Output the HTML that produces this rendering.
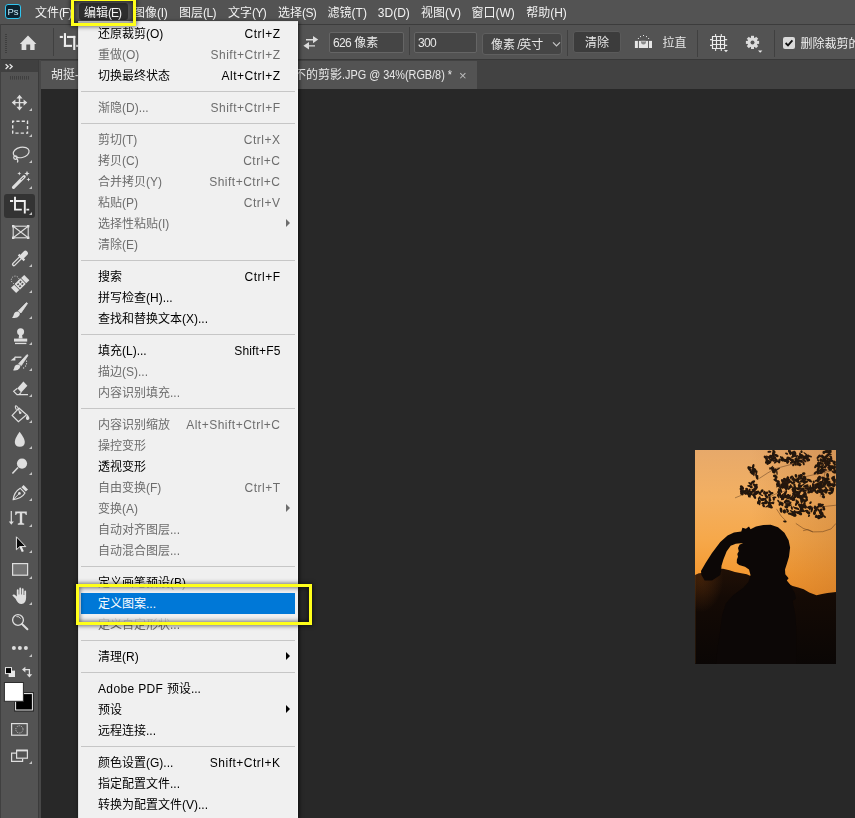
<!DOCTYPE html>
<html lang="zh-CN">
<head>
<meta charset="utf-8">
<title>Photoshop 编辑菜单</title>
<style>
*{box-sizing:border-box;margin:0;padding:0}
html,body{width:855px;height:818px;overflow:hidden;background:#282828}
body{position:relative;font-family:"Liberation Sans","Noto Sans CJK SC",sans-serif;font-size:12px;color:#e6e6e6;-webkit-font-smoothing:antialiased}
.abs{position:absolute}
/* menu bar */
#menubar,#optbar,#tabbar{will-change:transform}
#menubar{position:absolute;left:0;top:0;width:855px;height:24px;background:#535353}
#menubar .m{position:absolute;top:2px;height:24px;line-height:23px;white-space:nowrap;color:#f2f2f2;font-size:12px}
#editbg{position:absolute;left:78.7px;top:3px;width:49.3px;height:16.7px;background:#2e2e2e;border-radius:3px}
#pslogo{position:absolute;left:5px;top:4px;width:16px;height:15px;border:1px solid #31c5f0;border-radius:3px;background:#0c2330;color:#c8ecfa;font-size:9.5px;line-height:13px;text-align:center;letter-spacing:0}
/* options bar */
#optbar{position:absolute;left:0;top:24px;width:855px;height:36px;background:#535353;border-top:1px solid #3c3c3c;border-bottom:1px solid #383838}
.vsep{position:absolute;width:1px;background:#404040}
.inp{position:absolute;background:#454545;border:1px solid #656565;border-radius:2px;color:#e8e8e8;font-size:12px;line-height:21px;padding-left:3px;white-space:nowrap}
/* tab bar */
#tabbar{position:absolute;left:41px;top:60px;width:814px;height:29px;background:#424242}
#tab{position:absolute;left:0;top:1px;width:436px;height:28px;background:#535353;color:#e8e8e8;line-height:29px;white-space:nowrap}
/* toolbar */
#toolbar{position:absolute;left:0;top:60px;width:38px;height:758px;background:#535353}
#tbhead{position:absolute;left:0;top:0;width:38px;height:12px;background:#404040}
#tbsep{position:absolute;left:38px;top:60px;width:3px;height:758px;background:#474747;border-left:1px solid #3b3b3b}
#lborder{position:absolute;left:0;top:24px;width:1px;height:794px;background:#404040}
.tool{position:absolute;left:7px;width:26px;height:26px}
.tri{position:absolute;width:0;height:0;border-left:3px solid transparent;border-bottom:3px solid #cfcfcf}
/* dropdown menu */
#menu{position:absolute;left:78px;top:21px;width:220px;height:797px;background:#f0f0f0;border-left:1px solid #e0e0e0;border-right:1px solid #f6f6f6;border-top:1px solid #e4e4e4;color:#000;box-shadow:1px 1px 4px rgba(0,0,0,.75)}
.mi{position:absolute;left:2px;width:214px;height:21px;line-height:20px;white-space:nowrap;font-size:12px}
.mi .t{position:absolute;left:17px;top:1px}
.mi .k{position:absolute;right:14.5px;top:1px;letter-spacing:.5px}
.mi.dis{color:#6d6d6d}
.mi.sel{background:#0078d7;color:#fff}
.sep{position:absolute;left:2px;width:214px;height:1px;background:#c6c6c6}
.ar{position:absolute;left:205.3px;top:5.7px;width:0;height:0;border-top:4px solid transparent;border-bottom:4px solid transparent;border-left:4.5px solid #000}
.dis .ar{border-left-color:#6d6d6d}
.ybox{position:absolute;border:3.3px solid #ffff1a;filter:drop-shadow(0 0 2.5px rgba(0,0,0,.85))}
</style>
</head>
<body>
<!-- canvas / document area -->
<div id="tabbar">
  <div id="tab"><span class="abs" style="left:10px">胡挺-</span><span class="abs" style="left:253px">不的剪影</span><span class="abs" style="left:300.5px;transform:scaleX(.905);transform-origin:0 50%">.JPG @ 34%(RGB/8) *</span><span class="abs" style="left:418px;color:#bdbdbd;font-size:13px">×</span></div>
</div>

<svg class="abs" style="left:695px;top:450px" width="141" height="213.5" viewBox="0 0 141 213.5">
<defs>
<linearGradient id="sky" x1="0" y1="0" x2="0" y2="1"><stop offset="0" stop-color="#e7a96a"/><stop offset="0.22" stop-color="#f3b062"/><stop offset="0.42" stop-color="#f6a84a"/><stop offset="0.58" stop-color="#f59a32"/><stop offset="0.68" stop-color="#f09028"/></linearGradient>
<linearGradient id="shade" x1="0" y1="0" x2="1" y2="0"><stop offset="0.4" stop-color="#a8642c" stop-opacity="0"/><stop offset="1" stop-color="#a8642c" stop-opacity="0.3"/></linearGradient>
<linearGradient id="hill" x1="0" y1="0" x2="0" y2="1"><stop offset="0" stop-color="#201006"/><stop offset="0.3" stop-color="#140a05"/><stop offset="1" stop-color="#0a0605"/></linearGradient>
<radialGradient id="glow" cx="0.04" cy="0.6" r="0.16"><stop offset="0" stop-color="#8a460d" stop-opacity="0.32"/><stop offset="1" stop-color="#b8601a" stop-opacity="0"/></radialGradient>
<filter id="bl" x="-5%" y="-5%" width="110%" height="110%"><feGaussianBlur stdDeviation="0.45"/></filter>
<clipPath id="hc"><path d="M0.1 125.0 L3.3 123.5 L7.8 122.8 L13.3 119.9 L20.7 119.1 L28.0 118.8 L34.4 120.2 L39.9 122.1 L46.3 123.2 L51.8 124.3 L57.3 126.8 L90.3 132.3 L97.7 136.0 L103.2 137.5 L108.7 139.3 L114.2 142.6 L121.5 145.2 L127.0 144.1 L132.5 143.0 L141.1 141.9 L141.1 216.7 L0.1 216.7Z"/></clipPath>
</defs>
<rect width="141" height="213.5" fill="url(#sky)"/>
<rect width="141" height="213.5" fill="url(#shade)"/>
<g fill="#24150a" filter="url(#bl)"><ellipse cx="59.0" cy="23.8" rx="2.4" ry="0.8" transform="rotate(96 59.0 23.8)"/><ellipse cx="58.3" cy="22.4" rx="2.2" ry="0.7" transform="rotate(78 58.3 22.4)"/><ellipse cx="59.8" cy="21.1" rx="2.0" ry="1.4" transform="rotate(22 59.8 21.1)"/><ellipse cx="61.9" cy="27.0" rx="2.9" ry="1.2" transform="rotate(71 61.9 27.0)"/><ellipse cx="59.0" cy="19.8" rx="2.8" ry="1.0" transform="rotate(26 59.0 19.8)"/><ellipse cx="61.4" cy="23.0" rx="2.7" ry="0.9" transform="rotate(105 61.4 23.0)"/><ellipse cx="54.8" cy="17.2" rx="2.2" ry="0.8" transform="rotate(11 54.8 17.2)"/><ellipse cx="62.3" cy="26.9" rx="2.0" ry="1.0" transform="rotate(105 62.3 26.9)"/><ellipse cx="56.8" cy="22.8" rx="2.7" ry="1.3" transform="rotate(44 56.8 22.8)"/><ellipse cx="54.4" cy="18.9" rx="2.8" ry="1.4" transform="rotate(52 54.4 18.9)"/><ellipse cx="59.4" cy="19.5" rx="2.0" ry="1.4" transform="rotate(27 59.4 19.5)"/><ellipse cx="57.5" cy="21.0" rx="2.4" ry="1.4" transform="rotate(103 57.5 21.0)"/><ellipse cx="58.2" cy="16.4" rx="2.5" ry="1.2" transform="rotate(104 58.2 16.4)"/><ellipse cx="47.1" cy="42.1" rx="2.9" ry="1.1" transform="rotate(120 47.1 42.1)"/><ellipse cx="61.2" cy="42.6" rx="2.4" ry="1.6" transform="rotate(148 61.2 42.6)"/><ellipse cx="53.5" cy="45.1" rx="2.4" ry="0.7" transform="rotate(83 53.5 45.1)"/><ellipse cx="56.0" cy="42.5" rx="1.4" ry="1.4" transform="rotate(23 56.0 42.5)"/><ellipse cx="54.7" cy="45.3" rx="2.8" ry="0.8" transform="rotate(81 54.7 45.3)"/><ellipse cx="47.0" cy="37.5" rx="2.7" ry="1.5" transform="rotate(50 47.0 37.5)"/><ellipse cx="50.2" cy="42.5" rx="2.8" ry="1.6" transform="rotate(27 50.2 42.5)"/><ellipse cx="56.4" cy="43.6" rx="1.7" ry="1.1" transform="rotate(106 56.4 43.6)"/><ellipse cx="54.6" cy="40.5" rx="2.0" ry="1.0" transform="rotate(102 54.6 40.5)"/><ellipse cx="61.3" cy="37.9" rx="2.2" ry="1.3" transform="rotate(122 61.3 37.9)"/><ellipse cx="62.2" cy="42.6" rx="2.6" ry="1.5" transform="rotate(144 62.2 42.6)"/><ellipse cx="50.4" cy="43.3" rx="1.5" ry="1.3" transform="rotate(11 50.4 43.3)"/><ellipse cx="58.1" cy="41.6" rx="1.6" ry="1.0" transform="rotate(9 58.1 41.6)"/><ellipse cx="57.9" cy="40.0" rx="1.5" ry="1.0" transform="rotate(5 57.9 40.0)"/><ellipse cx="59.3" cy="35.3" rx="1.6" ry="0.9" transform="rotate(63 59.3 35.3)"/><ellipse cx="52.7" cy="42.2" rx="2.7" ry="1.6" transform="rotate(84 52.7 42.2)"/><ellipse cx="52.1" cy="40.2" rx="1.5" ry="1.0" transform="rotate(48 52.1 40.2)"/><ellipse cx="56.2" cy="37.0" rx="1.3" ry="1.6" transform="rotate(95 56.2 37.0)"/><ellipse cx="58.4" cy="44.9" rx="1.3" ry="1.2" transform="rotate(176 58.4 44.9)"/><ellipse cx="59.2" cy="34.6" rx="1.7" ry="1.0" transform="rotate(30 59.2 34.6)"/><ellipse cx="55.4" cy="33.9" rx="2.6" ry="1.0" transform="rotate(40 55.4 33.9)"/><ellipse cx="57.8" cy="32.2" rx="2.7" ry="1.4" transform="rotate(147 57.8 32.2)"/><ellipse cx="54.3" cy="36.0" rx="2.2" ry="1.0" transform="rotate(5 54.3 36.0)"/><ellipse cx="59.0" cy="40.8" rx="1.7" ry="1.3" transform="rotate(172 59.0 40.8)"/><ellipse cx="46.9" cy="42.6" rx="3.0" ry="1.6" transform="rotate(66 46.9 42.6)"/><ellipse cx="55.3" cy="43.9" rx="1.6" ry="0.9" transform="rotate(112 55.3 43.9)"/><ellipse cx="60.9" cy="35.4" rx="2.1" ry="1.3" transform="rotate(144 60.9 35.4)"/><ellipse cx="60.5" cy="43.5" rx="2.8" ry="1.4" transform="rotate(135 60.5 43.5)"/><ellipse cx="51.1" cy="40.5" rx="2.6" ry="1.0" transform="rotate(144 51.1 40.5)"/><ellipse cx="59.8" cy="39.0" rx="2.0" ry="1.6" transform="rotate(130 59.8 39.0)"/><ellipse cx="56.0" cy="42.6" rx="1.6" ry="1.5" transform="rotate(145 56.0 42.6)"/><ellipse cx="59.3" cy="46.1" rx="3.0" ry="1.3" transform="rotate(63 59.3 46.1)"/><ellipse cx="51.7" cy="39.1" rx="1.3" ry="1.6" transform="rotate(117 51.7 39.1)"/><ellipse cx="46.5" cy="38.6" rx="2.0" ry="1.5" transform="rotate(149 46.5 38.6)"/><ellipse cx="55.6" cy="44.1" rx="1.8" ry="0.9" transform="rotate(106 55.6 44.1)"/><ellipse cx="54.3" cy="45.4" rx="1.5" ry="1.5" transform="rotate(64 54.3 45.4)"/><ellipse cx="48.4" cy="41.6" rx="2.8" ry="1.1" transform="rotate(165 48.4 41.6)"/><ellipse cx="63.7" cy="49.6" rx="2.2" ry="0.7" transform="rotate(79 63.7 49.6)"/><ellipse cx="70.7" cy="50.2" rx="2.7" ry="0.9" transform="rotate(85 70.7 50.2)"/><ellipse cx="69.3" cy="42.7" rx="1.9" ry="1.2" transform="rotate(100 69.3 42.7)"/><ellipse cx="71.1" cy="46.7" rx="2.3" ry="0.9" transform="rotate(50 71.1 46.7)"/><ellipse cx="71.3" cy="43.0" rx="2.3" ry="1.4" transform="rotate(164 71.3 43.0)"/><ellipse cx="63.6" cy="52.3" rx="2.2" ry="1.2" transform="rotate(125 63.6 52.3)"/><ellipse cx="63.9" cy="51.8" rx="2.1" ry="1.5" transform="rotate(126 63.9 51.8)"/><ellipse cx="76.8" cy="43.2" rx="1.7" ry="1.2" transform="rotate(170 76.8 43.2)"/><ellipse cx="72.3" cy="46.7" rx="1.5" ry="1.1" transform="rotate(13 72.3 46.7)"/><ellipse cx="70.6" cy="52.3" rx="2.4" ry="1.4" transform="rotate(161 70.6 52.3)"/><ellipse cx="74.8" cy="56.4" rx="2.4" ry="0.8" transform="rotate(159 74.8 56.4)"/><ellipse cx="74.7" cy="48.8" rx="2.9" ry="1.1" transform="rotate(88 74.7 48.8)"/><ellipse cx="78.8" cy="49.1" rx="1.6" ry="1.1" transform="rotate(93 78.8 49.1)"/><ellipse cx="68.2" cy="53.3" rx="1.8" ry="1.3" transform="rotate(4 68.2 53.3)"/><ellipse cx="64.6" cy="47.6" rx="1.3" ry="1.0" transform="rotate(112 64.6 47.6)"/><ellipse cx="68.1" cy="49.5" rx="3.0" ry="1.4" transform="rotate(175 68.1 49.5)"/><ellipse cx="74.2" cy="52.7" rx="1.4" ry="1.4" transform="rotate(49 74.2 52.7)"/><ellipse cx="74.5" cy="54.2" rx="2.8" ry="1.4" transform="rotate(47 74.5 54.2)"/><ellipse cx="75.7" cy="57.1" rx="2.3" ry="1.3" transform="rotate(16 75.7 57.1)"/><ellipse cx="77.6" cy="52.5" rx="2.0" ry="0.8" transform="rotate(169 77.6 52.5)"/><ellipse cx="64.9" cy="43.3" rx="1.4" ry="1.5" transform="rotate(12 64.9 43.3)"/><ellipse cx="74.5" cy="44.8" rx="1.9" ry="1.2" transform="rotate(167 74.5 44.8)"/><ellipse cx="70.0" cy="53.1" rx="2.2" ry="0.9" transform="rotate(20 70.0 53.1)"/><ellipse cx="71.5" cy="51.5" rx="1.6" ry="1.0" transform="rotate(55 71.5 51.5)"/><ellipse cx="70.7" cy="44.6" rx="2.2" ry="0.9" transform="rotate(62 70.7 44.6)"/><ellipse cx="75.0" cy="50.2" rx="1.3" ry="1.4" transform="rotate(99 75.0 50.2)"/><ellipse cx="72.8" cy="55.8" rx="2.9" ry="0.8" transform="rotate(147 72.8 55.8)"/><ellipse cx="64.5" cy="52.5" rx="2.7" ry="1.1" transform="rotate(91 64.5 52.5)"/><ellipse cx="66.9" cy="41.0" rx="1.9" ry="1.4" transform="rotate(127 66.9 41.0)"/><ellipse cx="66.5" cy="45.1" rx="1.9" ry="0.7" transform="rotate(23 66.5 45.1)"/><ellipse cx="77.6" cy="53.2" rx="1.7" ry="0.8" transform="rotate(15 77.6 53.2)"/><ellipse cx="75.1" cy="42.2" rx="2.4" ry="1.0" transform="rotate(44 75.1 42.2)"/><ellipse cx="68.7" cy="55.9" rx="1.6" ry="1.1" transform="rotate(47 68.7 55.9)"/><ellipse cx="79.3" cy="47.5" rx="2.2" ry="0.9" transform="rotate(174 79.3 47.5)"/><ellipse cx="68.4" cy="55.0" rx="1.3" ry="1.0" transform="rotate(85 68.4 55.0)"/><ellipse cx="66.3" cy="49.6" rx="2.2" ry="0.7" transform="rotate(48 66.3 49.6)"/><ellipse cx="75.4" cy="52.9" rx="1.4" ry="0.7" transform="rotate(55 75.4 52.9)"/><ellipse cx="79.9" cy="20.6" rx="2.2" ry="1.4" transform="rotate(118 79.9 20.6)"/><ellipse cx="74.4" cy="1.8" rx="2.0" ry="1.0" transform="rotate(177 74.4 1.8)"/><ellipse cx="82.8" cy="19.2" rx="2.4" ry="0.7" transform="rotate(150 82.8 19.2)"/><ellipse cx="81.3" cy="5.5" rx="2.5" ry="1.4" transform="rotate(25 81.3 5.5)"/><ellipse cx="72.3" cy="11.7" rx="2.7" ry="1.4" transform="rotate(149 72.3 11.7)"/><ellipse cx="70.7" cy="7.6" rx="2.5" ry="1.3" transform="rotate(41 70.7 7.6)"/><ellipse cx="80.5" cy="12.3" rx="1.9" ry="0.8" transform="rotate(150 80.5 12.3)"/><ellipse cx="71.7" cy="9.7" rx="2.4" ry="1.3" transform="rotate(88 71.7 9.7)"/><ellipse cx="84.3" cy="11.0" rx="2.6" ry="1.2" transform="rotate(96 84.3 11.0)"/><ellipse cx="76.3" cy="9.7" rx="2.6" ry="0.9" transform="rotate(13 76.3 9.7)"/><ellipse cx="78.8" cy="21.8" rx="1.6" ry="1.4" transform="rotate(176 78.8 21.8)"/><ellipse cx="73.2" cy="13.1" rx="2.1" ry="1.3" transform="rotate(138 73.2 13.1)"/><ellipse cx="72.2" cy="6.6" rx="1.4" ry="0.8" transform="rotate(46 72.2 6.6)"/><ellipse cx="76.4" cy="5.7" rx="2.3" ry="0.7" transform="rotate(11 76.4 5.7)"/><ellipse cx="78.6" cy="21.4" rx="2.5" ry="1.3" transform="rotate(52 78.6 21.4)"/><ellipse cx="72.6" cy="12.1" rx="2.1" ry="0.8" transform="rotate(161 72.6 12.1)"/><ellipse cx="81.9" cy="22.3" rx="2.9" ry="0.7" transform="rotate(83 81.9 22.3)"/><ellipse cx="79.0" cy="1.3" rx="2.1" ry="0.9" transform="rotate(38 79.0 1.3)"/><ellipse cx="80.6" cy="9.7" rx="2.3" ry="0.8" transform="rotate(94 80.6 9.7)"/><ellipse cx="80.1" cy="10.3" rx="2.7" ry="1.2" transform="rotate(160 80.1 10.3)"/><ellipse cx="75.8" cy="6.9" rx="2.8" ry="1.1" transform="rotate(4 75.8 6.9)"/><ellipse cx="82.9" cy="11.3" rx="2.1" ry="1.0" transform="rotate(25 82.9 11.3)"/><ellipse cx="76.3" cy="17.7" rx="2.7" ry="0.7" transform="rotate(135 76.3 17.7)"/><ellipse cx="78.5" cy="8.4" rx="2.9" ry="1.3" transform="rotate(162 78.5 8.4)"/><ellipse cx="77.8" cy="18.9" rx="2.0" ry="1.6" transform="rotate(106 77.8 18.9)"/><ellipse cx="75.6" cy="18.3" rx="1.8" ry="0.7" transform="rotate(18 75.6 18.3)"/><ellipse cx="78.8" cy="6.4" rx="2.9" ry="0.9" transform="rotate(48 78.8 6.4)"/><ellipse cx="74.4" cy="12.2" rx="1.9" ry="1.6" transform="rotate(159 74.4 12.2)"/><ellipse cx="78.5" cy="3.2" rx="2.9" ry="1.5" transform="rotate(99 78.5 3.2)"/><ellipse cx="77.0" cy="9.6" rx="2.5" ry="1.1" transform="rotate(135 77.0 9.6)"/><ellipse cx="74.4" cy="7.6" rx="1.4" ry="1.5" transform="rotate(23 74.4 7.6)"/><ellipse cx="79.7" cy="25.9" rx="1.8" ry="1.4" transform="rotate(176 79.7 25.9)"/><ellipse cx="80.7" cy="29.8" rx="1.8" ry="1.2" transform="rotate(71 80.7 29.8)"/><ellipse cx="81.1" cy="27.3" rx="1.7" ry="1.5" transform="rotate(89 81.1 27.3)"/><ellipse cx="81.1" cy="30.5" rx="3.0" ry="1.1" transform="rotate(25 81.1 30.5)"/><ellipse cx="102.4" cy="9.4" rx="1.9" ry="0.8" transform="rotate(43 102.4 9.4)"/><ellipse cx="100.3" cy="13.1" rx="2.8" ry="1.4" transform="rotate(74 100.3 13.1)"/><ellipse cx="91.9" cy="10.1" rx="1.9" ry="1.0" transform="rotate(11 91.9 10.1)"/><ellipse cx="98.4" cy="14.8" rx="1.5" ry="1.2" transform="rotate(113 98.4 14.8)"/><ellipse cx="105.2" cy="4.3" rx="1.8" ry="0.9" transform="rotate(72 105.2 4.3)"/><ellipse cx="87.7" cy="9.7" rx="2.7" ry="1.5" transform="rotate(4 87.7 9.7)"/><ellipse cx="112.6" cy="8.5" rx="2.8" ry="1.1" transform="rotate(106 112.6 8.5)"/><ellipse cx="109.8" cy="7.1" rx="2.9" ry="1.4" transform="rotate(154 109.8 7.1)"/><ellipse cx="107.9" cy="6.4" rx="1.5" ry="0.8" transform="rotate(94 107.9 6.4)"/><ellipse cx="95.1" cy="2.4" rx="2.4" ry="1.4" transform="rotate(82 95.1 2.4)"/><ellipse cx="98.1" cy="6.6" rx="2.6" ry="0.9" transform="rotate(166 98.1 6.6)"/><ellipse cx="96.0" cy="3.7" rx="1.5" ry="0.9" transform="rotate(115 96.0 3.7)"/><ellipse cx="99.3" cy="4.6" rx="1.4" ry="1.2" transform="rotate(105 99.3 4.6)"/><ellipse cx="95.7" cy="9.5" rx="2.3" ry="0.7" transform="rotate(54 95.7 9.5)"/><ellipse cx="87.2" cy="9.0" rx="2.4" ry="1.5" transform="rotate(86 87.2 9.0)"/><ellipse cx="101.5" cy="11.0" rx="2.9" ry="1.3" transform="rotate(55 101.5 11.0)"/><ellipse cx="110.8" cy="7.9" rx="2.4" ry="1.1" transform="rotate(46 110.8 7.9)"/><ellipse cx="94.0" cy="1.2" rx="1.4" ry="1.0" transform="rotate(76 94.0 1.2)"/><ellipse cx="98.2" cy="3.9" rx="2.7" ry="1.4" transform="rotate(91 98.2 3.9)"/><ellipse cx="104.7" cy="14.6" rx="1.8" ry="1.4" transform="rotate(42 104.7 14.6)"/><ellipse cx="103.1" cy="13.9" rx="1.8" ry="1.6" transform="rotate(89 103.1 13.9)"/><ellipse cx="103.4" cy="10.6" rx="2.0" ry="1.3" transform="rotate(171 103.4 10.6)"/><ellipse cx="106.3" cy="11.1" rx="1.7" ry="1.6" transform="rotate(26 106.3 11.1)"/><ellipse cx="104.2" cy="7.7" rx="2.0" ry="1.5" transform="rotate(159 104.2 7.7)"/><ellipse cx="99.3" cy="2.9" rx="1.9" ry="0.9" transform="rotate(168 99.3 2.9)"/><ellipse cx="100.8" cy="5.7" rx="2.4" ry="1.0" transform="rotate(67 100.8 5.7)"/><ellipse cx="97.9" cy="10.0" rx="1.3" ry="1.0" transform="rotate(63 97.9 10.0)"/><ellipse cx="105.7" cy="6.4" rx="2.9" ry="0.9" transform="rotate(64 105.7 6.4)"/><ellipse cx="106.5" cy="1.7" rx="1.4" ry="1.1" transform="rotate(67 106.5 1.7)"/><ellipse cx="106.3" cy="5.4" rx="1.9" ry="1.5" transform="rotate(5 106.3 5.4)"/><ellipse cx="89.9" cy="10.9" rx="2.6" ry="0.7" transform="rotate(6 89.9 10.9)"/><ellipse cx="113.5" cy="10.0" rx="1.7" ry="1.4" transform="rotate(162 113.5 10.0)"/><ellipse cx="96.9" cy="10.6" rx="2.9" ry="1.3" transform="rotate(47 96.9 10.6)"/><ellipse cx="99.2" cy="2.8" rx="1.8" ry="0.7" transform="rotate(136 99.2 2.8)"/><ellipse cx="110.7" cy="4.0" rx="2.9" ry="0.7" transform="rotate(42 110.7 4.0)"/><ellipse cx="87.0" cy="8.3" rx="2.9" ry="1.0" transform="rotate(45 87.0 8.3)"/><ellipse cx="91.7" cy="9.5" rx="2.9" ry="0.9" transform="rotate(144 91.7 9.5)"/><ellipse cx="99.9" cy="2.6" rx="2.3" ry="1.0" transform="rotate(58 99.9 2.6)"/><ellipse cx="92.6" cy="12.5" rx="1.4" ry="0.9" transform="rotate(136 92.6 12.5)"/><ellipse cx="100.9" cy="9.1" rx="1.4" ry="1.2" transform="rotate(59 100.9 9.1)"/><ellipse cx="114.2" cy="6.2" rx="3.0" ry="0.9" transform="rotate(15 114.2 6.2)"/><ellipse cx="109.1" cy="10.3" rx="2.5" ry="1.1" transform="rotate(42 109.1 10.3)"/><ellipse cx="91.1" cy="10.2" rx="2.4" ry="1.4" transform="rotate(152 91.1 10.2)"/><ellipse cx="98.3" cy="4.8" rx="2.7" ry="1.0" transform="rotate(102 98.3 4.8)"/><ellipse cx="92.2" cy="12.0" rx="1.6" ry="0.9" transform="rotate(44 92.2 12.0)"/><ellipse cx="108.5" cy="13.2" rx="2.3" ry="1.0" transform="rotate(71 108.5 13.2)"/><ellipse cx="111.0" cy="6.9" rx="1.7" ry="1.4" transform="rotate(118 111.0 6.9)"/><ellipse cx="105.4" cy="7.0" rx="2.1" ry="1.4" transform="rotate(151 105.4 7.0)"/><ellipse cx="103.3" cy="6.3" rx="1.8" ry="0.8" transform="rotate(34 103.3 6.3)"/><ellipse cx="111.6" cy="6.1" rx="2.9" ry="1.0" transform="rotate(156 111.6 6.1)"/><ellipse cx="93.9" cy="8.4" rx="2.6" ry="1.6" transform="rotate(19 93.9 8.4)"/><ellipse cx="91.6" cy="3.6" rx="1.7" ry="1.0" transform="rotate(25 91.6 3.6)"/><ellipse cx="102.9" cy="10.9" rx="2.3" ry="1.3" transform="rotate(37 102.9 10.9)"/><ellipse cx="109.0" cy="7.4" rx="2.5" ry="0.9" transform="rotate(56 109.0 7.4)"/><ellipse cx="104.5" cy="13.9" rx="2.2" ry="0.8" transform="rotate(18 104.5 13.9)"/><ellipse cx="92.4" cy="10.7" rx="2.4" ry="0.8" transform="rotate(29 92.4 10.7)"/><ellipse cx="97.7" cy="2.4" rx="1.8" ry="1.0" transform="rotate(172 97.7 2.4)"/><ellipse cx="96.7" cy="12.6" rx="1.9" ry="1.1" transform="rotate(156 96.7 12.6)"/><ellipse cx="106.2" cy="46.4" rx="1.6" ry="1.4" transform="rotate(37 106.2 46.4)"/><ellipse cx="111.4" cy="47.4" rx="2.0" ry="1.4" transform="rotate(73 111.4 47.4)"/><ellipse cx="104.7" cy="37.3" rx="1.6" ry="0.7" transform="rotate(99 104.7 37.3)"/><ellipse cx="88.1" cy="31.6" rx="1.5" ry="1.3" transform="rotate(67 88.1 31.6)"/><ellipse cx="91.5" cy="46.4" rx="1.8" ry="1.2" transform="rotate(167 91.5 46.4)"/><ellipse cx="105.3" cy="55.7" rx="2.7" ry="1.6" transform="rotate(36 105.3 55.7)"/><ellipse cx="107.4" cy="60.8" rx="3.0" ry="1.1" transform="rotate(10 107.4 60.8)"/><ellipse cx="105.5" cy="41.0" rx="2.8" ry="1.3" transform="rotate(148 105.5 41.0)"/><ellipse cx="104.3" cy="62.0" rx="1.7" ry="1.1" transform="rotate(152 104.3 62.0)"/><ellipse cx="100.2" cy="39.0" rx="1.7" ry="1.1" transform="rotate(93 100.2 39.0)"/><ellipse cx="93.3" cy="51.5" rx="1.7" ry="1.4" transform="rotate(162 93.3 51.5)"/><ellipse cx="108.0" cy="50.6" rx="2.6" ry="0.7" transform="rotate(151 108.0 50.6)"/><ellipse cx="105.7" cy="57.3" rx="2.2" ry="1.3" transform="rotate(55 105.7 57.3)"/><ellipse cx="87.2" cy="54.2" rx="2.0" ry="1.3" transform="rotate(80 87.2 54.2)"/><ellipse cx="95.1" cy="47.8" rx="2.4" ry="1.1" transform="rotate(42 95.1 47.8)"/><ellipse cx="98.3" cy="28.7" rx="2.1" ry="0.9" transform="rotate(85 98.3 28.7)"/><ellipse cx="101.4" cy="51.2" rx="2.0" ry="0.8" transform="rotate(80 101.4 51.2)"/><ellipse cx="94.2" cy="46.4" rx="2.4" ry="0.8" transform="rotate(132 94.2 46.4)"/><ellipse cx="99.0" cy="32.3" rx="1.4" ry="1.2" transform="rotate(68 99.0 32.3)"/><ellipse cx="102.4" cy="44.4" rx="2.8" ry="1.6" transform="rotate(132 102.4 44.4)"/><ellipse cx="99.8" cy="38.4" rx="3.0" ry="1.1" transform="rotate(172 99.8 38.4)"/><ellipse cx="102.4" cy="42.5" rx="2.6" ry="1.5" transform="rotate(12 102.4 42.5)"/><ellipse cx="89.5" cy="61.0" rx="1.6" ry="1.5" transform="rotate(49 89.5 61.0)"/><ellipse cx="99.5" cy="39.6" rx="2.2" ry="1.5" transform="rotate(37 99.5 39.6)"/><ellipse cx="96.3" cy="61.2" rx="1.8" ry="0.7" transform="rotate(33 96.3 61.2)"/><ellipse cx="104.9" cy="63.4" rx="2.5" ry="1.5" transform="rotate(30 104.9 63.4)"/><ellipse cx="98.3" cy="39.9" rx="2.2" ry="1.3" transform="rotate(65 98.3 39.9)"/><ellipse cx="105.0" cy="35.8" rx="2.3" ry="1.5" transform="rotate(19 105.0 35.8)"/><ellipse cx="109.1" cy="45.9" rx="2.0" ry="1.4" transform="rotate(48 109.1 45.9)"/><ellipse cx="108.5" cy="45.7" rx="1.9" ry="1.4" transform="rotate(80 108.5 45.7)"/><ellipse cx="102.9" cy="62.5" rx="1.4" ry="1.4" transform="rotate(46 102.9 62.5)"/><ellipse cx="87.6" cy="31.1" rx="2.3" ry="1.3" transform="rotate(56 87.6 31.1)"/><ellipse cx="99.9" cy="46.7" rx="1.6" ry="1.3" transform="rotate(78 99.9 46.7)"/><ellipse cx="83.0" cy="45.1" rx="1.5" ry="0.9" transform="rotate(118 83.0 45.1)"/><ellipse cx="97.9" cy="46.8" rx="1.9" ry="0.8" transform="rotate(64 97.9 46.8)"/><ellipse cx="99.0" cy="62.1" rx="2.3" ry="0.9" transform="rotate(112 99.0 62.1)"/><ellipse cx="91.7" cy="47.8" rx="2.9" ry="0.9" transform="rotate(27 91.7 47.8)"/><ellipse cx="107.0" cy="55.9" rx="2.8" ry="1.4" transform="rotate(72 107.0 55.9)"/><ellipse cx="97.0" cy="48.8" rx="2.4" ry="1.2" transform="rotate(63 97.0 48.8)"/><ellipse cx="91.1" cy="35.9" rx="2.9" ry="1.4" transform="rotate(45 91.1 35.9)"/><ellipse cx="99.8" cy="44.2" rx="2.2" ry="1.1" transform="rotate(43 99.8 44.2)"/><ellipse cx="109.5" cy="53.1" rx="1.3" ry="1.2" transform="rotate(169 109.5 53.1)"/><ellipse cx="101.4" cy="53.8" rx="2.3" ry="1.2" transform="rotate(115 101.4 53.8)"/><ellipse cx="99.6" cy="38.8" rx="1.8" ry="1.0" transform="rotate(9 99.6 38.8)"/><ellipse cx="107.4" cy="35.1" rx="2.5" ry="0.7" transform="rotate(152 107.4 35.1)"/><ellipse cx="96.9" cy="32.7" rx="2.6" ry="1.1" transform="rotate(41 96.9 32.7)"/><ellipse cx="102.9" cy="52.7" rx="1.4" ry="1.0" transform="rotate(135 102.9 52.7)"/><ellipse cx="92.5" cy="29.0" rx="2.5" ry="0.9" transform="rotate(100 92.5 29.0)"/><ellipse cx="84.9" cy="53.8" rx="2.2" ry="0.9" transform="rotate(116 84.9 53.8)"/><ellipse cx="104.0" cy="44.6" rx="2.8" ry="0.7" transform="rotate(47 104.0 44.6)"/><ellipse cx="98.3" cy="64.2" rx="2.9" ry="1.4" transform="rotate(59 98.3 64.2)"/><ellipse cx="103.4" cy="38.7" rx="1.7" ry="1.5" transform="rotate(114 103.4 38.7)"/><ellipse cx="92.9" cy="31.1" rx="3.0" ry="1.1" transform="rotate(151 92.9 31.1)"/><ellipse cx="92.7" cy="28.8" rx="2.0" ry="1.4" transform="rotate(103 92.7 28.8)"/><ellipse cx="94.7" cy="55.5" rx="2.4" ry="0.8" transform="rotate(164 94.7 55.5)"/><ellipse cx="98.7" cy="49.3" rx="1.5" ry="1.5" transform="rotate(62 98.7 49.3)"/><ellipse cx="98.8" cy="49.4" rx="1.4" ry="1.3" transform="rotate(114 98.8 49.4)"/><ellipse cx="93.0" cy="30.1" rx="1.4" ry="1.2" transform="rotate(65 93.0 30.1)"/><ellipse cx="102.8" cy="29.8" rx="2.8" ry="0.8" transform="rotate(156 102.8 29.8)"/><ellipse cx="109.7" cy="36.5" rx="1.5" ry="0.9" transform="rotate(20 109.7 36.5)"/><ellipse cx="110.7" cy="50.7" rx="2.7" ry="1.3" transform="rotate(149 110.7 50.7)"/><ellipse cx="91.7" cy="38.6" rx="1.5" ry="0.8" transform="rotate(136 91.7 38.6)"/><ellipse cx="99.5" cy="57.7" rx="2.0" ry="0.7" transform="rotate(46 99.5 57.7)"/><ellipse cx="94.6" cy="63.6" rx="1.9" ry="1.0" transform="rotate(174 94.6 63.6)"/><ellipse cx="83.4" cy="46.2" rx="2.4" ry="0.7" transform="rotate(74 83.4 46.2)"/><ellipse cx="85.0" cy="53.6" rx="1.9" ry="1.3" transform="rotate(97 85.0 53.6)"/><ellipse cx="100.1" cy="65.2" rx="1.5" ry="1.4" transform="rotate(31 100.1 65.2)"/><ellipse cx="103.9" cy="46.7" rx="2.6" ry="1.6" transform="rotate(1 103.9 46.7)"/><ellipse cx="86.7" cy="47.5" rx="2.7" ry="0.9" transform="rotate(89 86.7 47.5)"/><ellipse cx="89.3" cy="61.9" rx="1.7" ry="1.5" transform="rotate(51 89.3 61.9)"/><ellipse cx="99.9" cy="63.3" rx="2.1" ry="0.8" transform="rotate(115 99.9 63.3)"/><ellipse cx="108.8" cy="55.5" rx="2.5" ry="1.4" transform="rotate(113 108.8 55.5)"/><ellipse cx="91.3" cy="56.9" rx="2.0" ry="1.5" transform="rotate(16 91.3 56.9)"/><ellipse cx="99.0" cy="44.6" rx="1.7" ry="0.9" transform="rotate(162 99.0 44.6)"/><ellipse cx="87.9" cy="46.6" rx="2.8" ry="0.9" transform="rotate(83 87.9 46.6)"/><ellipse cx="84.4" cy="43.2" rx="2.6" ry="1.3" transform="rotate(63 84.4 43.2)"/><ellipse cx="94.4" cy="53.8" rx="2.7" ry="1.3" transform="rotate(134 94.4 53.8)"/><ellipse cx="102.0" cy="58.5" rx="2.6" ry="1.2" transform="rotate(23 102.0 58.5)"/><ellipse cx="83.5" cy="51.2" rx="1.7" ry="0.9" transform="rotate(54 83.5 51.2)"/><ellipse cx="93.2" cy="28.7" rx="1.6" ry="0.8" transform="rotate(45 93.2 28.7)"/><ellipse cx="92.2" cy="59.8" rx="1.6" ry="1.0" transform="rotate(34 92.2 59.8)"/><ellipse cx="109.8" cy="43.9" rx="1.5" ry="1.6" transform="rotate(18 109.8 43.9)"/><ellipse cx="86.1" cy="60.1" rx="2.7" ry="1.4" transform="rotate(78 86.1 60.1)"/><ellipse cx="101.1" cy="62.1" rx="1.5" ry="0.9" transform="rotate(70 101.1 62.1)"/><ellipse cx="106.4" cy="49.4" rx="2.6" ry="1.3" transform="rotate(90 106.4 49.4)"/><ellipse cx="90.3" cy="36.4" rx="1.5" ry="1.2" transform="rotate(73 90.3 36.4)"/><ellipse cx="96.4" cy="27.2" rx="2.0" ry="1.2" transform="rotate(135 96.4 27.2)"/><ellipse cx="90.9" cy="51.3" rx="2.5" ry="1.5" transform="rotate(139 90.9 51.3)"/><ellipse cx="92.9" cy="28.7" rx="2.5" ry="1.3" transform="rotate(82 92.9 28.7)"/><ellipse cx="92.6" cy="61.6" rx="1.5" ry="1.1" transform="rotate(141 92.6 61.6)"/><ellipse cx="94.4" cy="30.9" rx="1.7" ry="1.1" transform="rotate(82 94.4 30.9)"/><ellipse cx="90.3" cy="37.6" rx="2.4" ry="1.5" transform="rotate(33 90.3 37.6)"/><ellipse cx="89.7" cy="31.8" rx="2.0" ry="1.1" transform="rotate(175 89.7 31.8)"/><ellipse cx="107.9" cy="50.2" rx="1.6" ry="1.4" transform="rotate(169 107.9 50.2)"/><ellipse cx="92.4" cy="45.9" rx="2.3" ry="1.2" transform="rotate(129 92.4 45.9)"/><ellipse cx="85.2" cy="45.4" rx="2.7" ry="1.2" transform="rotate(74 85.2 45.4)"/><ellipse cx="103.7" cy="43.7" rx="2.5" ry="1.1" transform="rotate(137 103.7 43.7)"/><ellipse cx="107.9" cy="60.8" rx="1.9" ry="0.8" transform="rotate(49 107.9 60.8)"/><ellipse cx="95.8" cy="48.1" rx="2.0" ry="1.1" transform="rotate(126 95.8 48.1)"/><ellipse cx="92.6" cy="55.1" rx="1.7" ry="1.4" transform="rotate(169 92.6 55.1)"/><ellipse cx="90.3" cy="45.0" rx="2.7" ry="1.1" transform="rotate(38 90.3 45.0)"/><ellipse cx="106.3" cy="59.7" rx="2.7" ry="1.3" transform="rotate(84 106.3 59.7)"/><ellipse cx="90.6" cy="43.0" rx="2.9" ry="1.0" transform="rotate(115 90.6 43.0)"/><ellipse cx="102.8" cy="29.9" rx="2.1" ry="1.0" transform="rotate(99 102.8 29.9)"/><ellipse cx="106.8" cy="59.9" rx="1.9" ry="1.5" transform="rotate(48 106.8 59.9)"/><ellipse cx="91.8" cy="53.9" rx="2.0" ry="0.9" transform="rotate(0 91.8 53.9)"/><ellipse cx="95.8" cy="36.0" rx="1.7" ry="1.0" transform="rotate(86 95.8 36.0)"/><ellipse cx="86.4" cy="53.7" rx="2.4" ry="1.0" transform="rotate(167 86.4 53.7)"/><ellipse cx="99.4" cy="42.8" rx="2.7" ry="1.5" transform="rotate(141 99.4 42.8)"/><ellipse cx="105.9" cy="61.1" rx="2.4" ry="0.7" transform="rotate(2 105.9 61.1)"/><ellipse cx="108.8" cy="41.7" rx="1.7" ry="0.8" transform="rotate(26 108.8 41.7)"/><ellipse cx="98.5" cy="64.6" rx="1.9" ry="0.8" transform="rotate(163 98.5 64.6)"/><ellipse cx="98.8" cy="38.6" rx="2.8" ry="1.2" transform="rotate(141 98.8 38.6)"/><ellipse cx="90.2" cy="29.8" rx="2.6" ry="1.5" transform="rotate(36 90.2 29.8)"/><ellipse cx="93.3" cy="32.7" rx="2.6" ry="1.1" transform="rotate(159 93.3 32.7)"/><ellipse cx="89.9" cy="43.1" rx="1.7" ry="0.8" transform="rotate(89 89.9 43.1)"/><ellipse cx="106.7" cy="51.7" rx="1.5" ry="1.1" transform="rotate(90 106.7 51.7)"/><ellipse cx="83.7" cy="42.0" rx="1.3" ry="1.5" transform="rotate(84 83.7 42.0)"/><ellipse cx="85.9" cy="40.3" rx="2.7" ry="1.0" transform="rotate(75 85.9 40.3)"/><ellipse cx="101.2" cy="45.3" rx="2.4" ry="1.3" transform="rotate(5 101.2 45.3)"/><ellipse cx="87.6" cy="35.9" rx="2.9" ry="1.0" transform="rotate(177 87.6 35.9)"/><ellipse cx="86.8" cy="45.7" rx="2.8" ry="0.7" transform="rotate(129 86.8 45.7)"/><ellipse cx="91.0" cy="38.2" rx="2.8" ry="1.0" transform="rotate(85 91.0 38.2)"/><ellipse cx="84.2" cy="43.8" rx="1.7" ry="1.1" transform="rotate(76 84.2 43.8)"/><ellipse cx="84.3" cy="40.5" rx="1.8" ry="1.4" transform="rotate(73 84.3 40.5)"/><ellipse cx="89.4" cy="46.4" rx="2.2" ry="1.6" transform="rotate(118 89.4 46.4)"/><ellipse cx="99.4" cy="35.3" rx="1.8" ry="1.0" transform="rotate(106 99.4 35.3)"/><ellipse cx="88.4" cy="33.1" rx="1.4" ry="1.4" transform="rotate(159 88.4 33.1)"/><ellipse cx="94.0" cy="45.4" rx="1.8" ry="0.7" transform="rotate(34 94.0 45.4)"/><ellipse cx="107.5" cy="39.1" rx="2.4" ry="1.4" transform="rotate(164 107.5 39.1)"/><ellipse cx="88.2" cy="36.3" rx="2.4" ry="1.3" transform="rotate(107 88.2 36.3)"/><ellipse cx="94.3" cy="38.1" rx="2.4" ry="1.1" transform="rotate(137 94.3 38.1)"/><ellipse cx="102.3" cy="51.8" rx="1.4" ry="1.4" transform="rotate(165 102.3 51.8)"/><ellipse cx="92.1" cy="36.4" rx="2.7" ry="1.4" transform="rotate(101 92.1 36.4)"/><ellipse cx="96.8" cy="57.9" rx="2.0" ry="1.0" transform="rotate(78 96.8 57.9)"/><ellipse cx="88.1" cy="31.3" rx="1.4" ry="1.2" transform="rotate(7 88.1 31.3)"/><ellipse cx="107.1" cy="59.2" rx="2.3" ry="1.5" transform="rotate(80 107.1 59.2)"/><ellipse cx="106.5" cy="47.8" rx="2.3" ry="1.5" transform="rotate(177 106.5 47.8)"/><ellipse cx="87.7" cy="48.7" rx="1.5" ry="1.3" transform="rotate(38 87.7 48.7)"/><ellipse cx="98.3" cy="48.7" rx="1.3" ry="1.3" transform="rotate(22 98.3 48.7)"/><ellipse cx="101.5" cy="45.4" rx="2.8" ry="0.8" transform="rotate(3 101.5 45.4)"/><ellipse cx="95.8" cy="36.8" rx="2.5" ry="0.9" transform="rotate(9 95.8 36.8)"/><ellipse cx="99.1" cy="29.6" rx="2.8" ry="1.4" transform="rotate(15 99.1 29.6)"/><ellipse cx="88.5" cy="34.2" rx="2.1" ry="1.5" transform="rotate(46 88.5 34.2)"/><ellipse cx="109.6" cy="42.8" rx="1.3" ry="0.7" transform="rotate(117 109.6 42.8)"/><ellipse cx="98.9" cy="41.4" rx="1.8" ry="1.4" transform="rotate(30 98.9 41.4)"/><ellipse cx="103.9" cy="35.7" rx="1.4" ry="1.0" transform="rotate(103 103.9 35.7)"/><ellipse cx="85.7" cy="53.0" rx="1.5" ry="1.4" transform="rotate(65 85.7 53.0)"/><ellipse cx="89.9" cy="33.9" rx="2.0" ry="1.0" transform="rotate(142 89.9 33.9)"/><ellipse cx="109.7" cy="40.5" rx="2.3" ry="1.0" transform="rotate(11 109.7 40.5)"/><ellipse cx="109.6" cy="43.9" rx="2.7" ry="1.0" transform="rotate(109 109.6 43.9)"/><ellipse cx="110.7" cy="44.0" rx="2.3" ry="1.0" transform="rotate(77 110.7 44.0)"/><ellipse cx="104.2" cy="38.6" rx="2.5" ry="1.2" transform="rotate(161 104.2 38.6)"/><ellipse cx="100.0" cy="36.5" rx="1.3" ry="0.9" transform="rotate(76 100.0 36.5)"/><ellipse cx="85.6" cy="37.1" rx="2.8" ry="0.7" transform="rotate(150 85.6 37.1)"/><ellipse cx="102.5" cy="29.0" rx="2.3" ry="0.9" transform="rotate(153 102.5 29.0)"/><ellipse cx="101.5" cy="30.8" rx="2.9" ry="1.0" transform="rotate(15 101.5 30.8)"/><ellipse cx="84.5" cy="40.6" rx="1.6" ry="1.4" transform="rotate(168 84.5 40.6)"/><ellipse cx="98.3" cy="62.5" rx="2.5" ry="1.1" transform="rotate(37 98.3 62.5)"/><ellipse cx="96.8" cy="64.4" rx="2.6" ry="1.1" transform="rotate(16 96.8 64.4)"/><ellipse cx="101.8" cy="29.8" rx="1.7" ry="1.2" transform="rotate(161 101.8 29.8)"/><ellipse cx="136.2" cy="10.3" rx="2.1" ry="1.2" transform="rotate(34 136.2 10.3)"/><ellipse cx="132.2" cy="32.3" rx="2.5" ry="1.0" transform="rotate(102 132.2 32.3)"/><ellipse cx="124.6" cy="32.8" rx="1.6" ry="0.7" transform="rotate(179 124.6 32.8)"/><ellipse cx="128.3" cy="28.2" rx="2.4" ry="1.4" transform="rotate(28 128.3 28.2)"/><ellipse cx="125.7" cy="13.8" rx="2.2" ry="0.7" transform="rotate(6 125.7 13.8)"/><ellipse cx="140.1" cy="20.9" rx="2.1" ry="1.2" transform="rotate(47 140.1 20.9)"/><ellipse cx="131.8" cy="6.2" rx="2.9" ry="1.4" transform="rotate(147 131.8 6.2)"/><ellipse cx="135.6" cy="19.4" rx="1.4" ry="0.9" transform="rotate(33 135.6 19.4)"/><ellipse cx="132.6" cy="25.2" rx="2.2" ry="1.5" transform="rotate(82 132.6 25.2)"/><ellipse cx="139.8" cy="14.5" rx="1.4" ry="1.2" transform="rotate(72 139.8 14.5)"/><ellipse cx="137.9" cy="39.2" rx="1.7" ry="1.2" transform="rotate(115 137.9 39.2)"/><ellipse cx="138.7" cy="16.8" rx="2.0" ry="1.1" transform="rotate(29 138.7 16.8)"/><ellipse cx="140.6" cy="17.0" rx="1.7" ry="0.7" transform="rotate(46 140.6 17.0)"/><ellipse cx="124.8" cy="41.5" rx="2.8" ry="1.5" transform="rotate(8 124.8 41.5)"/><ellipse cx="132.6" cy="1.6" rx="2.4" ry="1.6" transform="rotate(10 132.6 1.6)"/><ellipse cx="136.1" cy="39.6" rx="2.9" ry="1.3" transform="rotate(54 136.1 39.6)"/><ellipse cx="123.2" cy="10.4" rx="1.5" ry="1.0" transform="rotate(46 123.2 10.4)"/><ellipse cx="135.7" cy="34.6" rx="1.6" ry="0.9" transform="rotate(26 135.7 34.6)"/><ellipse cx="130.1" cy="19.8" rx="2.5" ry="0.9" transform="rotate(6 130.1 19.8)"/><ellipse cx="134.9" cy="17.1" rx="2.9" ry="1.5" transform="rotate(160 134.9 17.1)"/><ellipse cx="135.0" cy="35.3" rx="1.5" ry="1.5" transform="rotate(152 135.0 35.3)"/><ellipse cx="125.9" cy="10.1" rx="1.9" ry="1.4" transform="rotate(86 125.9 10.1)"/><ellipse cx="128.0" cy="15.5" rx="1.7" ry="0.8" transform="rotate(128 128.0 15.5)"/><ellipse cx="127.0" cy="19.2" rx="2.8" ry="0.9" transform="rotate(74 127.0 19.2)"/><ellipse cx="133.6" cy="33.2" rx="2.7" ry="1.0" transform="rotate(30 133.6 33.2)"/><ellipse cx="124.9" cy="23.1" rx="2.8" ry="0.8" transform="rotate(176 124.9 23.1)"/><ellipse cx="139.7" cy="30.7" rx="2.4" ry="0.9" transform="rotate(86 139.7 30.7)"/><ellipse cx="129.5" cy="34.8" rx="1.6" ry="1.0" transform="rotate(178 129.5 34.8)"/><ellipse cx="140.5" cy="22.0" rx="1.5" ry="1.0" transform="rotate(161 140.5 22.0)"/><ellipse cx="138.8" cy="29.9" rx="1.8" ry="1.6" transform="rotate(3 138.8 29.9)"/><ellipse cx="132.7" cy="8.5" rx="1.5" ry="0.7" transform="rotate(150 132.7 8.5)"/><ellipse cx="126.3" cy="20.5" rx="2.0" ry="1.5" transform="rotate(39 126.3 20.5)"/><ellipse cx="127.2" cy="18.3" rx="1.6" ry="1.4" transform="rotate(128 127.2 18.3)"/><ellipse cx="131.6" cy="29.0" rx="1.4" ry="1.2" transform="rotate(89 131.6 29.0)"/><ellipse cx="129.9" cy="33.6" rx="2.3" ry="1.3" transform="rotate(146 129.9 33.6)"/><ellipse cx="126.6" cy="16.7" rx="1.4" ry="1.4" transform="rotate(73 126.6 16.7)"/><ellipse cx="130.2" cy="16.5" rx="2.7" ry="1.0" transform="rotate(152 130.2 16.5)"/><ellipse cx="135.4" cy="9.0" rx="1.3" ry="1.5" transform="rotate(86 135.4 9.0)"/><ellipse cx="134.3" cy="13.0" rx="1.6" ry="1.4" transform="rotate(66 134.3 13.0)"/><ellipse cx="133.9" cy="35.5" rx="2.3" ry="0.7" transform="rotate(94 133.9 35.5)"/><ellipse cx="123.7" cy="28.4" rx="1.5" ry="1.3" transform="rotate(147 123.7 28.4)"/><ellipse cx="134.5" cy="11.6" rx="2.5" ry="1.0" transform="rotate(135 134.5 11.6)"/><ellipse cx="139.5" cy="31.2" rx="2.9" ry="1.1" transform="rotate(92 139.5 31.2)"/><ellipse cx="123.3" cy="18.8" rx="1.3" ry="1.6" transform="rotate(40 123.3 18.8)"/><ellipse cx="132.0" cy="29.7" rx="1.7" ry="1.4" transform="rotate(5 132.0 29.7)"/><ellipse cx="137.7" cy="34.3" rx="1.6" ry="0.7" transform="rotate(108 137.7 34.3)"/><ellipse cx="124.1" cy="13.9" rx="2.5" ry="0.8" transform="rotate(157 124.1 13.9)"/><ellipse cx="130.2" cy="17.1" rx="1.5" ry="1.1" transform="rotate(90 130.2 17.1)"/><ellipse cx="130.0" cy="31.0" rx="2.0" ry="0.8" transform="rotate(107 130.0 31.0)"/><ellipse cx="133.2" cy="14.9" rx="2.3" ry="1.4" transform="rotate(30 133.2 14.9)"/><ellipse cx="135.2" cy="1.6" rx="2.0" ry="1.5" transform="rotate(95 135.2 1.6)"/><ellipse cx="122.8" cy="37.2" rx="2.6" ry="1.0" transform="rotate(43 122.8 37.2)"/><ellipse cx="127.2" cy="36.6" rx="3.0" ry="1.4" transform="rotate(164 127.2 36.6)"/><ellipse cx="134.4" cy="1.0" rx="1.4" ry="1.2" transform="rotate(172 134.4 1.0)"/><ellipse cx="135.3" cy="17.3" rx="2.0" ry="1.3" transform="rotate(66 135.3 17.3)"/><ellipse cx="128.0" cy="21.1" rx="2.0" ry="1.2" transform="rotate(4 128.0 21.1)"/><ellipse cx="137.1" cy="41.4" rx="2.6" ry="1.5" transform="rotate(114 137.1 41.4)"/><ellipse cx="134.1" cy="2.8" rx="1.4" ry="1.3" transform="rotate(48 134.1 2.8)"/><ellipse cx="128.3" cy="10.5" rx="2.2" ry="1.5" transform="rotate(112 128.3 10.5)"/><ellipse cx="130.6" cy="40.5" rx="2.0" ry="1.6" transform="rotate(52 130.6 40.5)"/><ellipse cx="127.8" cy="41.4" rx="1.5" ry="1.2" transform="rotate(172 127.8 41.4)"/><ellipse cx="125.4" cy="21.2" rx="2.1" ry="1.2" transform="rotate(27 125.4 21.2)"/><ellipse cx="133.3" cy="28.7" rx="1.8" ry="1.1" transform="rotate(52 133.3 28.7)"/><ellipse cx="130.8" cy="29.8" rx="2.2" ry="1.5" transform="rotate(110 130.8 29.8)"/><ellipse cx="123.2" cy="13.7" rx="1.6" ry="1.3" transform="rotate(83 123.2 13.7)"/><ellipse cx="123.0" cy="16.5" rx="2.1" ry="1.0" transform="rotate(44 123.0 16.5)"/><ellipse cx="131.9" cy="40.1" rx="2.0" ry="1.2" transform="rotate(2 131.9 40.1)"/><ellipse cx="124.9" cy="41.0" rx="1.7" ry="1.2" transform="rotate(88 124.9 41.0)"/><ellipse cx="128.4" cy="46.8" rx="1.8" ry="1.4" transform="rotate(29 128.4 46.8)"/><ellipse cx="139.3" cy="31.9" rx="2.0" ry="0.8" transform="rotate(70 139.3 31.9)"/><ellipse cx="122.5" cy="30.3" rx="1.5" ry="0.9" transform="rotate(173 122.5 30.3)"/><ellipse cx="130.3" cy="12.4" rx="1.9" ry="1.0" transform="rotate(122 130.3 12.4)"/><ellipse cx="123.6" cy="6.8" rx="2.7" ry="1.2" transform="rotate(133 123.6 6.8)"/><ellipse cx="130.3" cy="1.8" rx="2.6" ry="1.3" transform="rotate(165 130.3 1.8)"/><ellipse cx="137.3" cy="39.2" rx="1.3" ry="1.4" transform="rotate(105 137.3 39.2)"/><ellipse cx="120.6" cy="22.7" rx="2.3" ry="1.1" transform="rotate(141 120.6 22.7)"/><ellipse cx="136.2" cy="8.2" rx="1.9" ry="1.1" transform="rotate(82 136.2 8.2)"/><ellipse cx="129.7" cy="8.9" rx="2.0" ry="1.2" transform="rotate(69 129.7 8.9)"/><ellipse cx="126.7" cy="42.4" rx="2.7" ry="1.1" transform="rotate(80 126.7 42.4)"/><ellipse cx="132.9" cy="35.1" rx="1.5" ry="1.2" transform="rotate(105 132.9 35.1)"/><ellipse cx="139.0" cy="35.0" rx="1.9" ry="1.5" transform="rotate(151 139.0 35.0)"/><ellipse cx="135.1" cy="19.4" rx="2.0" ry="1.5" transform="rotate(2 135.1 19.4)"/><ellipse cx="138.0" cy="27.9" rx="2.1" ry="1.5" transform="rotate(139 138.0 27.9)"/><ellipse cx="120.7" cy="16.3" rx="2.2" ry="1.2" transform="rotate(123 120.7 16.3)"/><ellipse cx="125.9" cy="32.0" rx="2.3" ry="1.0" transform="rotate(171 125.9 32.0)"/><ellipse cx="127.3" cy="6.0" rx="1.5" ry="1.0" transform="rotate(72 127.3 6.0)"/><ellipse cx="123.5" cy="15.2" rx="2.8" ry="1.6" transform="rotate(88 123.5 15.2)"/><ellipse cx="123.1" cy="29.6" rx="3.0" ry="1.0" transform="rotate(95 123.1 29.6)"/><ellipse cx="132.3" cy="12.8" rx="1.8" ry="1.6" transform="rotate(149 132.3 12.8)"/><ellipse cx="127.2" cy="21.7" rx="2.8" ry="1.3" transform="rotate(148 127.2 21.7)"/><ellipse cx="140.2" cy="20.9" rx="2.0" ry="0.8" transform="rotate(52 140.2 20.9)"/><ellipse cx="123.4" cy="21.0" rx="1.6" ry="0.9" transform="rotate(113 123.4 21.0)"/><ellipse cx="125.8" cy="13.3" rx="3.0" ry="1.3" transform="rotate(8 125.8 13.3)"/><ellipse cx="122.9" cy="34.1" rx="1.8" ry="1.3" transform="rotate(1 122.9 34.1)"/><ellipse cx="127.5" cy="44.1" rx="2.3" ry="1.3" transform="rotate(35 127.5 44.1)"/><ellipse cx="123.0" cy="22.6" rx="1.8" ry="1.3" transform="rotate(96 123.0 22.6)"/><ellipse cx="138.4" cy="22.0" rx="2.0" ry="0.8" transform="rotate(28 138.4 22.0)"/><ellipse cx="130.8" cy="14.1" rx="1.5" ry="0.9" transform="rotate(94 130.8 14.1)"/><ellipse cx="134.2" cy="4.6" rx="2.7" ry="0.8" transform="rotate(2 134.2 4.6)"/><ellipse cx="131.4" cy="8.1" rx="2.5" ry="1.0" transform="rotate(30 131.4 8.1)"/><ellipse cx="130.3" cy="30.2" rx="2.8" ry="1.2" transform="rotate(63 130.3 30.2)"/><ellipse cx="124.6" cy="27.2" rx="1.4" ry="1.5" transform="rotate(105 124.6 27.2)"/><ellipse cx="137.2" cy="18.1" rx="2.4" ry="0.9" transform="rotate(8 137.2 18.1)"/><ellipse cx="139.2" cy="12.5" rx="1.8" ry="1.5" transform="rotate(147 139.2 12.5)"/><ellipse cx="128.0" cy="40.8" rx="2.9" ry="1.1" transform="rotate(171 128.0 40.8)"/><ellipse cx="130.9" cy="38.1" rx="2.5" ry="0.9" transform="rotate(56 130.9 38.1)"/><ellipse cx="135.7" cy="9.9" rx="2.6" ry="0.9" transform="rotate(31 135.7 9.9)"/><ellipse cx="127.9" cy="30.8" rx="3.0" ry="1.0" transform="rotate(101 127.9 30.8)"/><ellipse cx="136.2" cy="34.5" rx="2.0" ry="1.1" transform="rotate(12 136.2 34.5)"/><ellipse cx="137.3" cy="38.4" rx="1.9" ry="0.9" transform="rotate(34 137.3 38.4)"/><ellipse cx="129.6" cy="34.3" rx="1.4" ry="1.3" transform="rotate(61 129.6 34.3)"/><ellipse cx="135.4" cy="39.9" rx="1.5" ry="0.9" transform="rotate(150 135.4 39.9)"/><ellipse cx="135.4" cy="34.4" rx="2.7" ry="1.4" transform="rotate(29 135.4 34.4)"/><ellipse cx="125.4" cy="39.4" rx="1.9" ry="1.6" transform="rotate(37 125.4 39.4)"/><ellipse cx="137.6" cy="16.9" rx="1.7" ry="1.1" transform="rotate(24 137.6 16.9)"/><ellipse cx="129.2" cy="9.9" rx="2.8" ry="1.2" transform="rotate(66 129.2 9.9)"/><ellipse cx="130.8" cy="42.0" rx="1.7" ry="1.5" transform="rotate(22 130.8 42.0)"/><ellipse cx="123.1" cy="20.8" rx="1.8" ry="1.4" transform="rotate(69 123.1 20.8)"/><ellipse cx="126.4" cy="6.5" rx="1.8" ry="1.1" transform="rotate(15 126.4 6.5)"/><ellipse cx="134.8" cy="43.2" rx="1.8" ry="1.3" transform="rotate(20 134.8 43.2)"/><ellipse cx="124.9" cy="16.6" rx="2.2" ry="1.0" transform="rotate(12 124.9 16.6)"/><ellipse cx="128.8" cy="33.4" rx="1.5" ry="1.3" transform="rotate(51 128.8 33.4)"/><ellipse cx="122.6" cy="36.0" rx="2.6" ry="1.5" transform="rotate(155 122.6 36.0)"/><ellipse cx="134.3" cy="32.1" rx="1.4" ry="1.3" transform="rotate(119 134.3 32.1)"/><ellipse cx="126.7" cy="35.3" rx="2.4" ry="1.3" transform="rotate(45 126.7 35.3)"/><ellipse cx="134.1" cy="10.1" rx="2.4" ry="0.9" transform="rotate(21 134.1 10.1)"/><ellipse cx="138.1" cy="11.1" rx="2.5" ry="0.7" transform="rotate(7 138.1 11.1)"/><ellipse cx="133.0" cy="31.9" rx="1.8" ry="1.0" transform="rotate(7 133.0 31.9)"/><ellipse cx="127.6" cy="41.0" rx="1.6" ry="1.5" transform="rotate(103 127.6 41.0)"/><ellipse cx="129.6" cy="9.9" rx="2.0" ry="1.3" transform="rotate(63 129.6 9.9)"/><ellipse cx="140.0" cy="22.5" rx="2.6" ry="1.0" transform="rotate(8 140.0 22.5)"/><ellipse cx="135.5" cy="6.7" rx="1.4" ry="0.9" transform="rotate(20 135.5 6.7)"/><ellipse cx="131.8" cy="11.2" rx="2.9" ry="1.4" transform="rotate(16 131.8 11.2)"/><ellipse cx="128.4" cy="7.5" rx="2.6" ry="1.4" transform="rotate(51 128.4 7.5)"/><ellipse cx="139.0" cy="35.5" rx="2.0" ry="1.5" transform="rotate(124 139.0 35.5)"/><ellipse cx="130.0" cy="2.2" rx="2.1" ry="0.7" transform="rotate(126 130.0 2.2)"/><ellipse cx="124.0" cy="30.2" rx="2.9" ry="0.8" transform="rotate(137 124.0 30.2)"/><ellipse cx="138.9" cy="28.1" rx="2.7" ry="0.9" transform="rotate(98 138.9 28.1)"/><ellipse cx="138.6" cy="18.5" rx="2.2" ry="0.9" transform="rotate(11 138.6 18.5)"/><ellipse cx="126.5" cy="34.9" rx="1.6" ry="1.0" transform="rotate(25 126.5 34.9)"/><ellipse cx="128.4" cy="2.4" rx="1.7" ry="0.9" transform="rotate(93 128.4 2.4)"/><ellipse cx="121.3" cy="30.6" rx="1.9" ry="1.0" transform="rotate(159 121.3 30.6)"/><ellipse cx="122.4" cy="42.1" rx="1.9" ry="1.4" transform="rotate(99 122.4 42.1)"/><ellipse cx="118.1" cy="35.3" rx="2.4" ry="1.2" transform="rotate(83 118.1 35.3)"/><ellipse cx="118.7" cy="32.0" rx="1.5" ry="1.0" transform="rotate(65 118.7 32.0)"/><ellipse cx="118.5" cy="39.8" rx="1.8" ry="0.9" transform="rotate(126 118.5 39.8)"/><ellipse cx="114.8" cy="38.9" rx="1.9" ry="1.1" transform="rotate(65 114.8 38.9)"/><ellipse cx="119.1" cy="39.7" rx="1.3" ry="1.6" transform="rotate(135 119.1 39.7)"/><ellipse cx="124.8" cy="41.1" rx="3.0" ry="1.2" transform="rotate(20 124.8 41.1)"/><ellipse cx="111.6" cy="38.5" rx="1.6" ry="1.2" transform="rotate(1 111.6 38.5)"/><ellipse cx="124.6" cy="35.5" rx="2.4" ry="1.5" transform="rotate(117 124.6 35.5)"/><ellipse cx="117.8" cy="41.5" rx="1.5" ry="0.7" transform="rotate(139 117.8 41.5)"/><ellipse cx="120.6" cy="35.0" rx="1.6" ry="1.3" transform="rotate(152 120.6 35.0)"/><ellipse cx="121.4" cy="36.9" rx="2.6" ry="1.4" transform="rotate(134 121.4 36.9)"/><ellipse cx="116.0" cy="40.7" rx="2.7" ry="1.0" transform="rotate(66 116.0 40.7)"/><ellipse cx="112.4" cy="36.8" rx="2.7" ry="0.9" transform="rotate(7 112.4 36.8)"/><ellipse cx="111.0" cy="35.9" rx="2.7" ry="1.3" transform="rotate(163 111.0 35.9)"/><ellipse cx="124.2" cy="36.5" rx="2.1" ry="0.8" transform="rotate(54 124.2 36.5)"/><ellipse cx="115.5" cy="37.2" rx="2.5" ry="0.8" transform="rotate(80 115.5 37.2)"/><ellipse cx="120.7" cy="37.8" rx="1.4" ry="1.1" transform="rotate(34 120.7 37.8)"/><ellipse cx="117.8" cy="37.8" rx="2.7" ry="1.5" transform="rotate(142 117.8 37.8)"/><ellipse cx="113.3" cy="39.8" rx="2.4" ry="1.2" transform="rotate(76 113.3 39.8)"/><ellipse cx="114.5" cy="42.0" rx="2.4" ry="1.4" transform="rotate(163 114.5 42.0)"/><ellipse cx="120.5" cy="41.3" rx="2.1" ry="1.2" transform="rotate(63 120.5 41.3)"/><ellipse cx="118.8" cy="40.0" rx="1.9" ry="1.1" transform="rotate(175 118.8 40.0)"/><ellipse cx="125.3" cy="34.7" rx="3.0" ry="1.6" transform="rotate(112 125.3 34.7)"/><ellipse cx="120.7" cy="57.6" rx="2.4" ry="1.2" transform="rotate(53 120.7 57.6)"/><ellipse cx="110.1" cy="56.0" rx="2.1" ry="1.3" transform="rotate(54 110.1 56.0)"/><ellipse cx="114.0" cy="65.8" rx="1.3" ry="0.9" transform="rotate(122 114.0 65.8)"/><ellipse cx="116.7" cy="60.2" rx="2.4" ry="1.0" transform="rotate(105 116.7 60.2)"/><ellipse cx="112.8" cy="62.4" rx="2.3" ry="1.1" transform="rotate(21 112.8 62.4)"/><ellipse cx="124.0" cy="66.4" rx="2.2" ry="0.8" transform="rotate(155 124.0 66.4)"/><ellipse cx="119.6" cy="62.0" rx="2.2" ry="0.9" transform="rotate(88 119.6 62.0)"/><ellipse cx="114.8" cy="58.1" rx="2.3" ry="0.8" transform="rotate(92 114.8 58.1)"/><ellipse cx="117.1" cy="58.2" rx="2.0" ry="0.8" transform="rotate(79 117.1 58.2)"/><ellipse cx="125.0" cy="54.8" rx="2.5" ry="1.4" transform="rotate(21 125.0 54.8)"/><ellipse cx="128.9" cy="59.0" rx="1.5" ry="1.4" transform="rotate(71 128.9 59.0)"/><ellipse cx="124.8" cy="66.5" rx="2.3" ry="1.4" transform="rotate(25 124.8 66.5)"/><ellipse cx="120.1" cy="57.5" rx="1.7" ry="1.0" transform="rotate(3 120.1 57.5)"/><ellipse cx="115.5" cy="57.3" rx="1.8" ry="1.3" transform="rotate(77 115.5 57.3)"/><ellipse cx="126.3" cy="55.3" rx="2.8" ry="1.2" transform="rotate(165 126.3 55.3)"/><ellipse cx="122.8" cy="57.0" rx="2.6" ry="1.0" transform="rotate(137 122.8 57.0)"/><ellipse cx="115.5" cy="52.7" rx="1.5" ry="1.0" transform="rotate(133 115.5 52.7)"/><ellipse cx="128.5" cy="57.2" rx="1.4" ry="1.2" transform="rotate(18 128.5 57.2)"/><ellipse cx="110.4" cy="57.2" rx="1.5" ry="1.5" transform="rotate(122 110.4 57.2)"/><ellipse cx="119.5" cy="63.0" rx="2.1" ry="1.5" transform="rotate(105 119.5 63.0)"/><ellipse cx="120.9" cy="60.2" rx="1.5" ry="1.4" transform="rotate(33 120.9 60.2)"/><ellipse cx="114.2" cy="58.0" rx="2.5" ry="1.0" transform="rotate(26 114.2 58.0)"/><ellipse cx="125.4" cy="55.2" rx="2.5" ry="1.4" transform="rotate(171 125.4 55.2)"/><ellipse cx="126.0" cy="59.8" rx="1.6" ry="1.2" transform="rotate(157 126.0 59.8)"/><ellipse cx="120.3" cy="58.0" rx="1.6" ry="1.4" transform="rotate(122 120.3 58.0)"/><ellipse cx="113.8" cy="63.0" rx="1.6" ry="1.5" transform="rotate(71 113.8 63.0)"/><ellipse cx="125.6" cy="54.9" rx="1.4" ry="1.0" transform="rotate(39 125.6 54.9)"/><ellipse cx="126.3" cy="55.6" rx="1.4" ry="0.9" transform="rotate(65 126.3 55.6)"/><ellipse cx="111.6" cy="60.7" rx="2.0" ry="1.0" transform="rotate(1 111.6 60.7)"/><ellipse cx="114.1" cy="57.2" rx="1.3" ry="1.1" transform="rotate(178 114.1 57.2)"/><ellipse cx="123.7" cy="60.3" rx="2.4" ry="0.9" transform="rotate(49 123.7 60.3)"/><ellipse cx="122.0" cy="66.7" rx="2.3" ry="1.2" transform="rotate(172 122.0 66.7)"/><ellipse cx="126.3" cy="66.7" rx="2.3" ry="1.4" transform="rotate(157 126.3 66.7)"/><ellipse cx="125.9" cy="63.5" rx="2.4" ry="1.0" transform="rotate(51 125.9 63.5)"/><ellipse cx="126.8" cy="63.1" rx="2.9" ry="1.3" transform="rotate(55 126.8 63.1)"/><ellipse cx="125.6" cy="63.2" rx="2.2" ry="1.3" transform="rotate(63 125.6 63.2)"/><ellipse cx="121.4" cy="65.9" rx="1.4" ry="1.0" transform="rotate(58 121.4 65.9)"/><ellipse cx="129.4" cy="66.5" rx="1.9" ry="0.9" transform="rotate(42 129.4 66.5)"/><ellipse cx="123.8" cy="68.0" rx="1.3" ry="1.5" transform="rotate(82 123.8 68.0)"/><ellipse cx="89.9" cy="71.5" rx="1.8" ry="0.9" transform="rotate(12 89.9 71.5)"/><ellipse cx="106.7" cy="31.3" rx="2.5" ry="1.2" transform="rotate(169 106.7 31.3)"/><ellipse cx="103.9" cy="32.8" rx="2.3" ry="0.8" transform="rotate(32 103.9 32.8)"/><ellipse cx="101.0" cy="25.8" rx="1.9" ry="1.4" transform="rotate(77 101.0 25.8)"/><ellipse cx="109.6" cy="27.4" rx="2.1" ry="1.5" transform="rotate(50 109.6 27.4)"/><ellipse cx="108.1" cy="29.2" rx="1.6" ry="0.9" transform="rotate(127 108.1 29.2)"/><ellipse cx="109.1" cy="31.8" rx="1.6" ry="1.2" transform="rotate(156 109.1 31.8)"/><ellipse cx="106.0" cy="26.5" rx="2.5" ry="1.6" transform="rotate(108 106.0 26.5)"/><ellipse cx="114.6" cy="30.8" rx="2.8" ry="1.0" transform="rotate(25 114.6 30.8)"/><ellipse cx="110.4" cy="32.1" rx="2.8" ry="1.3" transform="rotate(166 110.4 32.1)"/><ellipse cx="109.2" cy="31.4" rx="2.6" ry="1.3" transform="rotate(73 109.2 31.4)"/><ellipse cx="106.1" cy="25.6" rx="1.4" ry="1.1" transform="rotate(8 106.1 25.6)"/><ellipse cx="104.8" cy="26.2" rx="2.1" ry="1.2" transform="rotate(46 104.8 26.2)"/><ellipse cx="107.2" cy="28.6" rx="2.9" ry="1.2" transform="rotate(178 107.2 28.6)"/><ellipse cx="114.1" cy="29.9" rx="2.5" ry="1.0" transform="rotate(17 114.1 29.9)"/><ellipse cx="109.8" cy="30.1" rx="2.6" ry="0.8" transform="rotate(147 109.8 30.1)"/><ellipse cx="102.8" cy="30.3" rx="2.3" ry="1.2" transform="rotate(118 102.8 30.3)"/><ellipse cx="104.3" cy="26.5" rx="2.6" ry="0.9" transform="rotate(128 104.3 26.5)"/><ellipse cx="108.7" cy="23.6" rx="1.8" ry="1.4" transform="rotate(176 108.7 23.6)"/><ellipse cx="83.5" cy="35.3" rx="2.2" ry="1.5" transform="rotate(24 83.5 35.3)"/><ellipse cx="90.0" cy="34.7" rx="2.4" ry="1.4" transform="rotate(65 90.0 34.7)"/><ellipse cx="88.8" cy="34.3" rx="2.6" ry="0.8" transform="rotate(5 88.8 34.3)"/><ellipse cx="87.1" cy="35.5" rx="2.2" ry="1.2" transform="rotate(33 87.1 35.5)"/><ellipse cx="89.3" cy="33.3" rx="1.6" ry="0.9" transform="rotate(133 89.3 33.3)"/><ellipse cx="88.2" cy="33.5" rx="1.3" ry="1.4" transform="rotate(44 88.2 33.5)"/><ellipse cx="90.1" cy="34.1" rx="2.4" ry="1.0" transform="rotate(144 90.1 34.1)"/><ellipse cx="83.2" cy="35.3" rx="2.8" ry="0.8" transform="rotate(132 83.2 35.3)"/><ellipse cx="90.2" cy="36.2" rx="2.0" ry="1.5" transform="rotate(11 90.2 36.2)"/><ellipse cx="83.0" cy="33.1" rx="2.9" ry="1.6" transform="rotate(113 83.0 33.1)"/><ellipse cx="86.7" cy="37.2" rx="1.7" ry="1.1" transform="rotate(42 86.7 37.2)"/></g>
<g fill="none" stroke="#3a2110" stroke-width="0.5" opacity="0.8"><path d="M64.3 28.4 L72.8 22.9 L80.1 18.7 L98.4 13.8 L113.0 11.4"/><path d="M40.0 47.9 L46.1 45.4 L54.6 39.4"/><path d="M85.0 33.3 L98.4 29.6 L113.0 26.0 L141.0 19.9"/><path d="M141.0 73.4 L136.1 78.9 L127.6 81.7 L117.9 81.9 L108.1 78.3 L100.8 73.4"/><path d="M117.9 81.9 L113.0 79.5 L108.1 80.7"/><path d="M70.4 49.1 L80.1 44.2 L91.1 40.6"/><path d="M91.1 71.0 L86.2 66.1 L81.4 58.8"/><path d="M141.0 55.2 L130.0 56.4 L119.1 58.8"/><path d="M132.5 0.4 L130.0 22.3 L125.2 46.7"/></g>
<path d="M0.1 125.0 L3.3 123.5 L7.8 122.8 L13.3 119.9 L20.7 119.1 L28.0 118.8 L34.4 120.2 L39.9 122.1 L46.3 123.2 L51.8 124.3 L57.3 126.8 L90.3 132.3 L97.7 136.0 L103.2 137.5 L108.7 139.3 L114.2 142.6 L121.5 145.2 L127.0 144.1 L132.5 143.0 L141.1 141.9 L141.1 216.7 L0.1 216.7Z" fill="url(#hill)"/>
<rect width="141" height="213.5" fill="url(#glow)" clip-path="url(#hc)"/>
<path d="M20.7 216.7 L22.5 198.3 L25.3 180.0 L27.1 165.3 L30.8 153.4 L38.1 145.2 L48.2 137.8 L53.3 132.3 L55.5 125.0 L54.0 119.5 L50.0 116.8 L44.1 114.9 L41.8 113.1 L41.9 109.4 L43.0 106.7 L42.3 103.9 L43.8 101.2 L43.0 97.9 L44.5 94.8 L48.2 92.9 L40.8 93.8 L35.7 95.7 L31.7 101.2 L28.4 109.4 L26.5 115.8 L26.2 120.4 L25.3 125.0 L17.0 130.5 L9.7 130.5 L6.4 125.0 L6.0 121.0 L10.6 113.1 L17.0 103.0 L25.3 92.0 L32.6 85.6 L39.0 82.5 L46.3 81.4 L47.4 77.7 L50.9 78.8 L54.0 76.6 L55.5 79.2 L61.0 76.6 L68.3 75.1 L75.7 74.8 L83.0 77.3 L89.4 82.8 L93.6 90.2 L95.1 97.5 L94.0 106.7 L91.8 114.0 L90.0 119.5 L90.3 124.3 L93.6 128.3 L91.8 130.5 L94.9 134.2 L99.9 143.3 L101.0 148.8 L97.7 150.7 L100.4 165.3 L101.3 180.0 L101.3 198.3 L101.7 216.7Z" fill="#0c0706"/>
</svg>

<!-- menubar -->
<div id="menubar">
  <div id="pslogo">Ps</div>
  <div id="editbg"></div>
  <span class="m" style="left:35px">文件<span style="letter-spacing:-1.0px">(F)</span></span>
  <span class="m" style="left:84px">编辑<span style="letter-spacing:-1px">(E)</span></span>
  <span class="m" style="left:133px">图像<span style="letter-spacing:-0.3px">(I)</span></span>
  <span class="m" style="left:179px">图层<span style="letter-spacing:-0.6px">(L)</span></span>
  <span class="m" style="left:228px">文字<span style="letter-spacing:-0.6px">(Y)</span></span>
  <span class="m" style="left:278px">选择<span style="letter-spacing:-0.6px">(S)</span></span>
  <span class="m" style="left:327.6px">滤镜(T)</span>
  <span class="m" style="left:377.8px">3D(D)</span>
  <span class="m" style="left:421px">视图(V)</span>
  <span class="m" style="left:471.5px">窗口(W)</span>
  <span class="m" style="left:526.2px">帮助(H)</span>
</div>

<!-- options bar -->
<div id="optbar">
<!-- gripper -->
<div class="abs" style="left:5px;top:9px;width:2px;height:19px;background:repeating-linear-gradient(to bottom,#3e3e3e 0 1px,transparent 1px 2px)"></div>
<!-- home -->
<svg class="abs" style="left:19px;top:10px" width="19" height="16" viewBox="0 0 19 16"><path d="M9 0.6 L17.4 9 L15.6 9 L15.6 15 L11.2 15 L11.2 9.6 L7.3 9.6 L7.3 15 L2.6 15 L2.6 9 L0.8 9 Z" fill="#e0e0e0"/></svg>
<div class="vsep" style="left:53px;top:3px;height:28px"></div>
<!-- crop icon (partly hidden by menu) -->
<svg class="abs" style="left:55px;top:5px" width="26" height="24" viewBox="55 30 26 24"><g fill="#ececec"><rect x="59.8" y="35.9" width="3.1" height="2.1"/><rect x="63.9" y="33.1" width="2.1" height="13.8"/><rect x="63.9" y="44.8" width="8.1" height="2.1"/><rect x="67" y="35.9" width="8.3" height="2.1"/><rect x="73.2" y="35.9" width="2.1" height="14.1"/><rect x="76.2" y="44.8" width="3" height="2.1"/></g></svg>
<!-- swap arrows -->
<svg class="abs" style="left:302px;top:10px" width="18" height="15" viewBox="0 0 18 15"><path d="M4 4.1H11V1L16.2 4.6L11 8.2V5.4H4Z" fill="#dcdcdc"/><path d="M13 10.2H7V7L1.4 10.8L7 14.4V11.5H13Z" fill="#dcdcdc"/></svg>
<div class="inp" style="left:329px;top:6.5px;width:75px;height:21px"><span style="letter-spacing:-.7px">626</span> 像素</div>
<div class="vsep" style="left:409px;top:2px;height:28px"></div>
<div class="inp" style="left:414px;top:6.5px;width:63px;height:21px"><span style="letter-spacing:-.7px">300</span></div>
<div class="inp" style="left:482px;top:8px;width:80px;height:22px;border-radius:3px;border-color:#5f5f5f;padding-left:8px;line-height:22px">像素<span style="letter-spacing:-1.2px"> /</span>英寸<svg class="abs" style="left:68.5px;top:7px" width="9" height="7" viewBox="0 0 9 7"><path d="M1 1.4L4.5 4.9L8 1.4" fill="none" stroke="#c4c4c4" stroke-width="1.3"/></svg></div>
<div class="vsep" style="left:567px;top:5px;height:26px"></div>
<div class="inp" style="left:573px;top:5.5px;width:48px;height:22px;border-radius:3px;background:#3c3c3c;border-color:#5a5a5a;padding:0;text-align:center;line-height:22px">清除</div>
<!-- straighten -->
<svg class="abs" style="left:633px;top:9px" width="21" height="16" viewBox="633 34 21 16"><g fill="#e6e6e6"><rect x="634.9" y="40.9" width="3" height="7.1"/><rect x="638.9" y="40.9" width="9.2" height="7.1"/><rect x="649" y="40.9" width="3" height="7.1"/><rect x="637.9" y="38" width="1" height="1"/><rect x="640" y="36.1" width="1" height="1"/><rect x="643" y="35" width="1" height="1"/><rect x="646" y="36.1" width="1" height="1"/><rect x="648.1" y="38" width="1" height="1"/></g><path d="M640.9 40.9H646.1Q646.1 44.4 643.5 44.4Q640.9 44.4 640.9 40.9Z" fill="#8a8a8a"/><path d="M641.3 41.3H645.7" stroke="#cfcfcf" stroke-width="0.8"/></svg>
<span class="abs" style="left:662.5px;top:8px;line-height:20px;color:#e6e6e6">拉直</span>
<div class="vsep" style="left:697px;top:5px;height:27px"></div>
<!-- grid -->
<svg class="abs" style="left:708px;top:8px" width="22" height="21" viewBox="708 33 22 21"><path d="M712.5 36.5H724.5V48.5H712.5ZM716.5 36.5V48.5M720.5 36.5V48.5M712.5 40.5H724.5M712.5 44.5H724.5" fill="none" stroke="#ececec" stroke-width="1.15"/><path d="M715.6 34V36.5M721.3 34V36.5M715.6 48.5V51M721.3 48.5V51M710 39.6H712.5M710 45.4H712.5M724.5 39.6H727.2M724.5 45.4H727.2" fill="none" stroke="#e4e4e4" stroke-width="1.1"/><path d="M724 50H728L726 52.2Z" fill="#e6e6e6"/></svg>
<!-- gear -->
<svg class="abs" style="left:744px;top:9px" width="20" height="20" viewBox="0 0 20 20"><g transform="translate(8.5,8.4)"><g fill="#dcdcdc"><rect x="-1.5" y="-6.6" width="3" height="13.2"/><rect x="-1.5" y="-6.6" width="3" height="13.2" transform="rotate(45)"/><rect x="-1.5" y="-6.6" width="3" height="13.2" transform="rotate(90)"/><rect x="-1.5" y="-6.6" width="3" height="13.2" transform="rotate(135)"/><circle r="5"/></g><circle r="2" fill="#535353"/></g><path d="M14 16.4H18.4L16.2 18.8Z" fill="#e6e6e6"/></svg>
<div class="vsep" style="left:774px;top:5px;height:27px"></div>
<!-- checkbox -->
<div class="abs" style="left:783px;top:12px;width:11.5px;height:11.5px;background:#dadada;border-radius:2px"><svg class="abs" style="left:0;top:0" width="12" height="12" viewBox="0 0 12 12"><path d="M2.6 6L5 8.4L9.4 3.4" fill="none" stroke="#111" stroke-width="1.8"/></svg></div>
<span class="abs" style="left:800.5px;top:9px;line-height:20px;color:#eee;white-space:nowrap">删除裁剪的像素</span>

</div>

<!-- toolbar -->
<div id="toolbar">
  <div id="tbhead"></div>
<div class="abs" style="left:4px;top:133.5px;width:30.5px;height:24px;background:#333;border-radius:3px"></div>
<svg class="abs" style="left:0;top:0" width="40" height="758" viewBox="0 60 40 758" fill="none" stroke="none">
<g id="ic" fill="#dedede" stroke="none">
<!-- header chevrons -->
<path d="M5.6 64.2L8.2 66.6L5.6 69M9.6 64.2L12.2 66.6L9.6 69" fill="none" stroke="#e4e4e4" stroke-width="1.3"/>
<!-- gripper -->
<path d="M10.5 76V79.6M12.5 76V79.6M14.5 76V79.6M16.5 76V79.6M18.5 76V79.6M20.5 76V79.6M22.5 76V79.6M24.5 76V79.6M26.5 76V79.6M28.5 76V79.6" stroke="#3f3f3f" stroke-width="1" fill="none"/>
<!-- flyout triangles -->
<g fill="#c4c4c4">
<path d="M32 108V111H29Z"/><path d="M32 134V137H29Z"/><path d="M32 160V163H29Z"/><path d="M32 186V189H29Z"/><path d="M32 212V215H29Z"/>
<path d="M32 264V267H29Z"/><path d="M32 290V293H29Z"/><path d="M32 316V319H29Z"/><path d="M32 342V345H29Z"/><path d="M32 368V371H29Z"/><path d="M32 394V397H29Z"/><path d="M32 420V423H29Z"/><path d="M32 446V449H29Z"/><path d="M32 472V475H29Z"/><path d="M32 498V501H29Z"/><path d="M32 524V527H29Z"/><path d="M32 550V553H29Z"/><path d="M32 576V579H29Z"/><path d="M32 602V605H29Z"/><path d="M32 654V657H29Z"/><path d="M32 761V764H29Z"/>
</g>
<!-- move -->
<path d="M19.5 94.8L22.6 98.6H20.2V101.9H23.6V99.5L27.3 102.6L23.6 105.7V103.3H20.2V106.8H22.6L19.5 110.4L16.4 106.8H18.8V103.3H15.4V105.7L11.7 102.6L15.4 99.5V101.9H18.8V98.6H16.4Z"/>
<!-- marquee -->
<rect x="12.7" y="121.3" width="14.8" height="11.8" fill="none" stroke="#e2e2e2" stroke-width="1.4" stroke-dasharray="3.2 2.1" stroke-dashoffset="1.6"/>
<!-- lasso -->
<g fill="none" stroke="#dedede" stroke-width="1.2">
<ellipse cx="21.2" cy="152.4" rx="8" ry="5.2" transform="rotate(-12 21.2 152.4)"/>
<circle cx="15.4" cy="157.6" r="1.7"/>
<path d="M16.6 158.8Q18.6 160 17.4 162.6"/>
</g>
<!-- magic wand -->
<path d="M13.5 187.3L24.2 176.6" stroke="#dedede" stroke-width="3.2" stroke-linecap="round" fill="none"/>
<path d="M21.2 179.6L23.4 177.4" stroke="#535353" stroke-width="1" stroke-linecap="round"/>
<path d="M19.3 171.4L19.9 172.9L21.4 173.5L19.9 174.1L19.3 175.6L18.7 174.1L17.2 173.5L18.7 172.9Z"/>
<path d="M27 170.8L27.8 172.7L29.7 173.5L27.8 174.3L27 176.2L26.2 174.3L24.3 173.5L26.2 172.7Z"/>
<path d="M28.5 177.4L29.1 178.9L30.6 179.5L29.1 180.1L28.5 181.6L27.9 180.1L26.4 179.5L27.9 178.9Z"/>
<!-- crop (selected) -->
<path d="M10 201H13.2M15 196.8V209.6H21.8M14.2 201H24.8V213.6M26.4 209.6H29.2" fill="none" stroke="#f0f0f0" stroke-width="1.9"/>
<!-- frame -->
<g fill="none" stroke="#dedede" stroke-width="1.1"><rect x="13.2" y="226.2" width="15" height="11.6"/><path d="M13.2 226.2L28.2 237.8M28.2 226.2L13.2 237.8"/></g>
<rect x="12" y="225" width="2.4" height="2.4"/><rect x="27" y="225" width="2.4" height="2.4"/><rect x="12" y="236.6" width="2.4" height="2.4"/><rect x="27" y="236.6" width="2.4" height="2.4"/>
<!-- eyedropper -->
<path d="M13.8 264.4L21.4 256.8" stroke="#dedede" stroke-width="3.8" stroke-linecap="round" fill="none"/>
<path d="M14 264.2L21.2 257" stroke="#535353" stroke-width="1.4" stroke-linecap="round" fill="none"/>
<path d="M18.6 254.6L24.4 260.4" stroke="#dedede" stroke-width="2.2" fill="none"/>
<path d="M22.2 256.4L25.4 253.2" stroke="#dedede" stroke-width="5" stroke-linecap="round" fill="none"/>
<!-- healing brush -->
<g transform="rotate(-44 20.2 284)"><rect x="11" y="280.3" width="4.4" height="7.4"/><rect x="25" y="280.3" width="4.4" height="7.4"/><rect x="16.1" y="280.1" width="8.2" height="7.8" rx="0.6"/><g fill="#535353"><rect x="17.6" y="281.8" width="1.9" height="1.7"/><rect x="20.9" y="281.8" width="1.9" height="1.7"/><rect x="17.6" y="284.6" width="1.9" height="1.7"/><rect x="20.9" y="284.6" width="1.9" height="1.7"/></g></g>
<circle cx="15.2" cy="280" r="3.9" fill="none" stroke="#dedede" stroke-width="1" stroke-dasharray="1 1.45"/>
<!-- brush -->
<path d="M26.5 302.6L27.5 303.4L21 312.9L18.3 310.9Z" stroke="#dedede" stroke-width="0.8"/>
<path d="M17.8 311.6Q14.4 311.6 13.8 314.6Q13.4 316.6 12 317.8Q17 318.8 19.2 315.8Q20.4 313.8 19.6 312.8Z"/>
<!-- stamp -->
<circle cx="20.6" cy="331.8" r="3.5"/><path d="M19.2 334H22L22.6 338.6H18.6Z"/><rect x="14" y="338.6" width="13.2" height="3"/><rect x="15" y="342.8" width="11.4" height="1.3"/>
<!-- history brush -->
<path d="M27 354.6L28 355.4L21.3 365.6L18.7 363.7Z" stroke="#dedede" stroke-width="0.8"/>
<path d="M18.4 364.4Q15 364.4 14.4 367.2Q14 369 13 370.2Q17.6 371 19.6 368.2Q20.8 366.4 20 365.6Z"/>
<path d="M21.4 357.2H14.6" stroke="#dedede" stroke-width="1.3" fill="none"/><path d="M10.6 360.4L15.4 356.4L15.4 360.4Z"/>
<path d="M26.4 360.6Q27.6 365.4 23 368.4" fill="none" stroke="#dedede" stroke-width="1.1" stroke-dasharray="1.1 1.5"/>
<!-- eraser -->
<path d="M17.4 388.2L23.4 381.6L27.4 385.8L21.2 392.4Z"/>
<path d="M17.4 388.2L13.6 391.2L17 394.6H28M21.2 392.4L19.2 394.4" fill="none" stroke="#dedede" stroke-width="1.1"/>
<!-- paint bucket -->
<path d="M12.2 415.4L19 408.2L26.6 414.8L18.4 421.6Z" fill="none" stroke="#dedede" stroke-width="1.2"/>
<path d="M19.6 412.4Q17.6 405.4 15.8 405.8Q14.6 406.4 16.4 409.8" fill="none" stroke="#dedede" stroke-width="1.1"/>
<circle cx="20.2" cy="412.8" r="1.3"/>
<path d="M27.4 414.4Q30 417.6 29.2 419Q28 420.6 26.4 419.4Q25.2 418 27.4 414.4Z"/>
<!-- blur drop -->
<path d="M19.6 431.8Q24.8 438.6 24.8 442Q24.8 446.8 19.8 446.8Q14.8 446.8 14.8 442Q14.8 438.6 19.6 431.8Z"/>
<!-- dodge -->
<circle cx="22" cy="463.6" r="5.1"/><path d="M18 467.6L12.4 473.6" stroke="#dedede" stroke-width="1.5" fill="none"/>
<!-- pen -->
<path d="M13.2 499.6Q14 492 20.2 488.2L25 493Q21.6 498.6 13.2 499.6Z" fill="none" stroke="#dedede" stroke-width="1.2"/>
<path d="M13.6 499.2L19 493.8" stroke="#dedede" stroke-width="1" fill="none"/><circle cx="19.4" cy="493.4" r="1.3"/>
<path d="M21.4 487.2L23.6 485L28 489.4L25.8 491.6Z"/>
<!-- vertical type -->
<path d="M11.3 511V522" stroke="#dedede" stroke-width="1.2" fill="none"/><path d="M8.8 521.4H13.8L11.3 524.8Z"/>
<path d="M15.2 511.6H26.8V515H25.8Q25.6 513.2 24.2 513.2H22.2V522.6Q22.2 523.6 24.2 523.6V524.8H17.8V523.6Q19.8 523.6 19.8 522.6V513.2H17.8Q16.4 513.2 16.2 515H15.2Z"/>
<!-- path selection -->
<path d="M20.6 546.8L22.8 551.6" stroke="#eaeaea" stroke-width="2.2" fill="none"/><path d="M16.4 536.8V549.8L19.8 546.6H25.8Z" fill="#0a0a0a" stroke="#e8e8e8" stroke-width="1"/>
<!-- rectangle -->
<rect x="12.6" y="563.6" width="15" height="11.6" fill="#747474" stroke="#dedede" stroke-width="1.2"/>
<!-- hand -->
<path d="M15.6 598.8L12.4 595.4Q13.2 593.8 14.8 594.8L16.8 596.6V590.2Q16.8 589.2 17.7 589.2Q18.6 589.2 18.6 590.2V594.6H19.3V588.6Q19.3 587.6 20.2 587.6Q21.1 587.6 21.1 588.6V594.6H21.8V589.2Q21.8 588.2 22.7 588.2Q23.6 588.2 23.6 589.2V595H24.3V591.4Q24.3 590.4 25.2 590.4Q26.1 590.4 26.1 591.4V597.6Q26.1 604 21.4 604Q17.8 604 15.6 598.8Z"/>
<!-- zoom -->
<circle cx="18" cy="620" r="5.4" fill="none" stroke="#dedede" stroke-width="1.3"/>
<path d="M16.4 616.6Q19.4 616 20.6 618.6" fill="none" stroke="#dedede" stroke-width="0.9"/>
<path d="M22 624L27.4 629.2" stroke="#dedede" stroke-width="2" stroke-linecap="round" fill="none"/>
<!-- dots -->
<circle cx="13.9" cy="648" r="2"/><circle cx="19.9" cy="648" r="2"/><circle cx="25.9" cy="648" r="2"/>
<!-- default colours -->
<rect x="8.6" y="670.6" width="6.4" height="6.4" fill="#e6e6e6"/><rect x="5.5" y="667.6" width="6" height="6" fill="#000" stroke="#e6e6e6" stroke-width="1"/>
<!-- swap colours -->
<path d="M24.6 669.6H29.4V675" fill="none" stroke="#dedede" stroke-width="1.3"/><path d="M22 669.6L25.4 666.8V672.4Z"/><path d="M29.4 677.4L26.6 674.2H32.2Z"/>
<!-- bg swatch -->
<rect x="14.5" y="692.5" width="19" height="18.6" fill="#000" stroke="#2e2e2e" stroke-width="1"/><rect x="15.6" y="693.6" width="16.8" height="16.4" fill="#000" stroke="#f4f4f4" stroke-width="1"/>
<!-- fg swatch -->
<rect x="4.4" y="682.5" width="19" height="18.8" fill="#fff" stroke="#2e2e2e" stroke-width="1"/>
<!-- quick mask -->
<rect x="11.6" y="723.6" width="15.6" height="11.6" fill="none" stroke="#dedede" stroke-width="1.2"/>
<circle cx="19.4" cy="729.4" r="3.6" fill="none" stroke="#dedede" stroke-width="1" stroke-dasharray="0.9 1.36"/>
<!-- screen mode -->
<rect x="16.6" y="750.2" width="10.8" height="8" fill="#535353" stroke="#dedede" stroke-width="1.2"/><path d="M16.6 750.6H27.4" stroke="#dedede" stroke-width="1.6"/>
<path d="M16 753.2H11.6V761.4H22.6V758.8" fill="none" stroke="#dedede" stroke-width="1.2"/>
</g>
</svg>

</div>
<div id="tbsep"></div><div id="lborder"></div>

<!-- edit menu -->
<div id="menu">
<div class="mi" style="top:1px"><span class="t">还原裁剪(O)</span><span class="k">Ctrl+Z</span></div>
<div class="mi dis" style="top:22px"><span class="t">重做(O)</span><span class="k">Shift+Ctrl+Z</span></div>
<div class="mi" style="top:43px"><span class="t">切换最终状态</span><span class="k">Alt+Ctrl+Z</span></div>
<div class="sep" style="top:69px"></div>
<div class="mi dis" style="top:75px"><span class="t">渐隐(D)...</span><span class="k">Shift+Ctrl+F</span></div>
<div class="sep" style="top:101px"></div>
<div class="mi dis" style="top:107px"><span class="t">剪切(T)</span><span class="k">Ctrl+X</span></div>
<div class="mi dis" style="top:128px"><span class="t">拷贝(C)</span><span class="k">Ctrl+C</span></div>
<div class="mi dis" style="top:149px"><span class="t">合并拷贝(Y)</span><span class="k">Shift+Ctrl+C</span></div>
<div class="mi dis" style="top:170px"><span class="t">粘贴(P)</span><span class="k">Ctrl+V</span></div>
<div class="mi dis" style="top:191px"><span class="t">选择性粘贴(I)</span><i class="ar"></i></div>
<div class="mi dis" style="top:212px"><span class="t">清除(E)</span></div>
<div class="sep" style="top:238px"></div>
<div class="mi" style="top:244px"><span class="t">搜索</span><span class="k">Ctrl+F</span></div>
<div class="mi" style="top:265px"><span class="t">拼写检查(H)...</span></div>
<div class="mi" style="top:286px"><span class="t">查找和替换文本(X)...</span></div>
<div class="sep" style="top:312px"></div>
<div class="mi" style="top:318px"><span class="t">填充(L)...</span><span class="k" style="letter-spacing:.15px">Shift+F5</span></div>
<div class="mi dis" style="top:339px"><span class="t">描边(S)...</span></div>
<div class="mi dis" style="top:360px"><span class="t">内容识别填充...</span></div>
<div class="sep" style="top:386px"></div>
<div class="mi dis" style="top:392px"><span class="t">内容识别缩放</span><span class="k">Alt+Shift+Ctrl+C</span></div>
<div class="mi dis" style="top:413px"><span class="t">操控变形</span></div>
<div class="mi" style="top:434px"><span class="t">透视变形</span></div>
<div class="mi dis" style="top:455px"><span class="t">自由变换(F)</span><span class="k">Ctrl+T</span></div>
<div class="mi dis" style="top:476px"><span class="t">变换(A)</span><i class="ar"></i></div>
<div class="mi dis" style="top:497px"><span class="t">自动对齐图层...</span></div>
<div class="mi dis" style="top:518px"><span class="t">自动混合图层...</span></div>
<div class="sep" style="top:544px"></div>
<div class="mi" style="top:550px"><span class="t">定义画笔预设(B)...</span></div>
<div class="mi sel" style="top:571px"><span class="t">定义图案...</span></div>
<div class="mi dis" style="top:592px"><span class="t">定义自定形状...</span></div>
<div class="sep" style="top:618px"></div>
<div class="mi" style="top:624px"><span class="t">清理(R)</span><i class="ar"></i></div>
<div class="sep" style="top:650px"></div>
<div class="mi" style="top:656px"><span class="t"><span style="letter-spacing:.35px">Adobe PDF </span>预设...</span></div>
<div class="mi" style="top:677px"><span class="t">预设</span><i class="ar"></i></div>
<div class="mi" style="top:698px"><span class="t">远程连接...</span></div>
<div class="sep" style="top:724px"></div>
<div class="mi" style="top:730px"><span class="t">颜色设置(G)...</span><span class="k">Shift+Ctrl+K</span></div>
<div class="mi" style="top:751px"><span class="t">指定配置文件...</span></div>
<div class="mi" style="top:772px"><span class="t">转换为配置文件(V)...</span></div>
</div>

<!-- annotation boxes -->
<div class="ybox" style="left:71px;top:-2.2px;width:64.5px;height:28.2px"></div>
<div class="abs" style="left:79px;top:587px;width:219px;height:35px;background:rgba(240,240,240,.75)"></div>
<div class="abs" style="left:81px;top:593px;width:214px;height:21px;background:#0078d7;color:#fff;line-height:20px"><span class="abs" style="left:17px;top:1px">定义图案...</span></div>
<div class="ybox" style="left:76.3px;top:584px;width:235.7px;height:41px"></div>
</body>
</html>
